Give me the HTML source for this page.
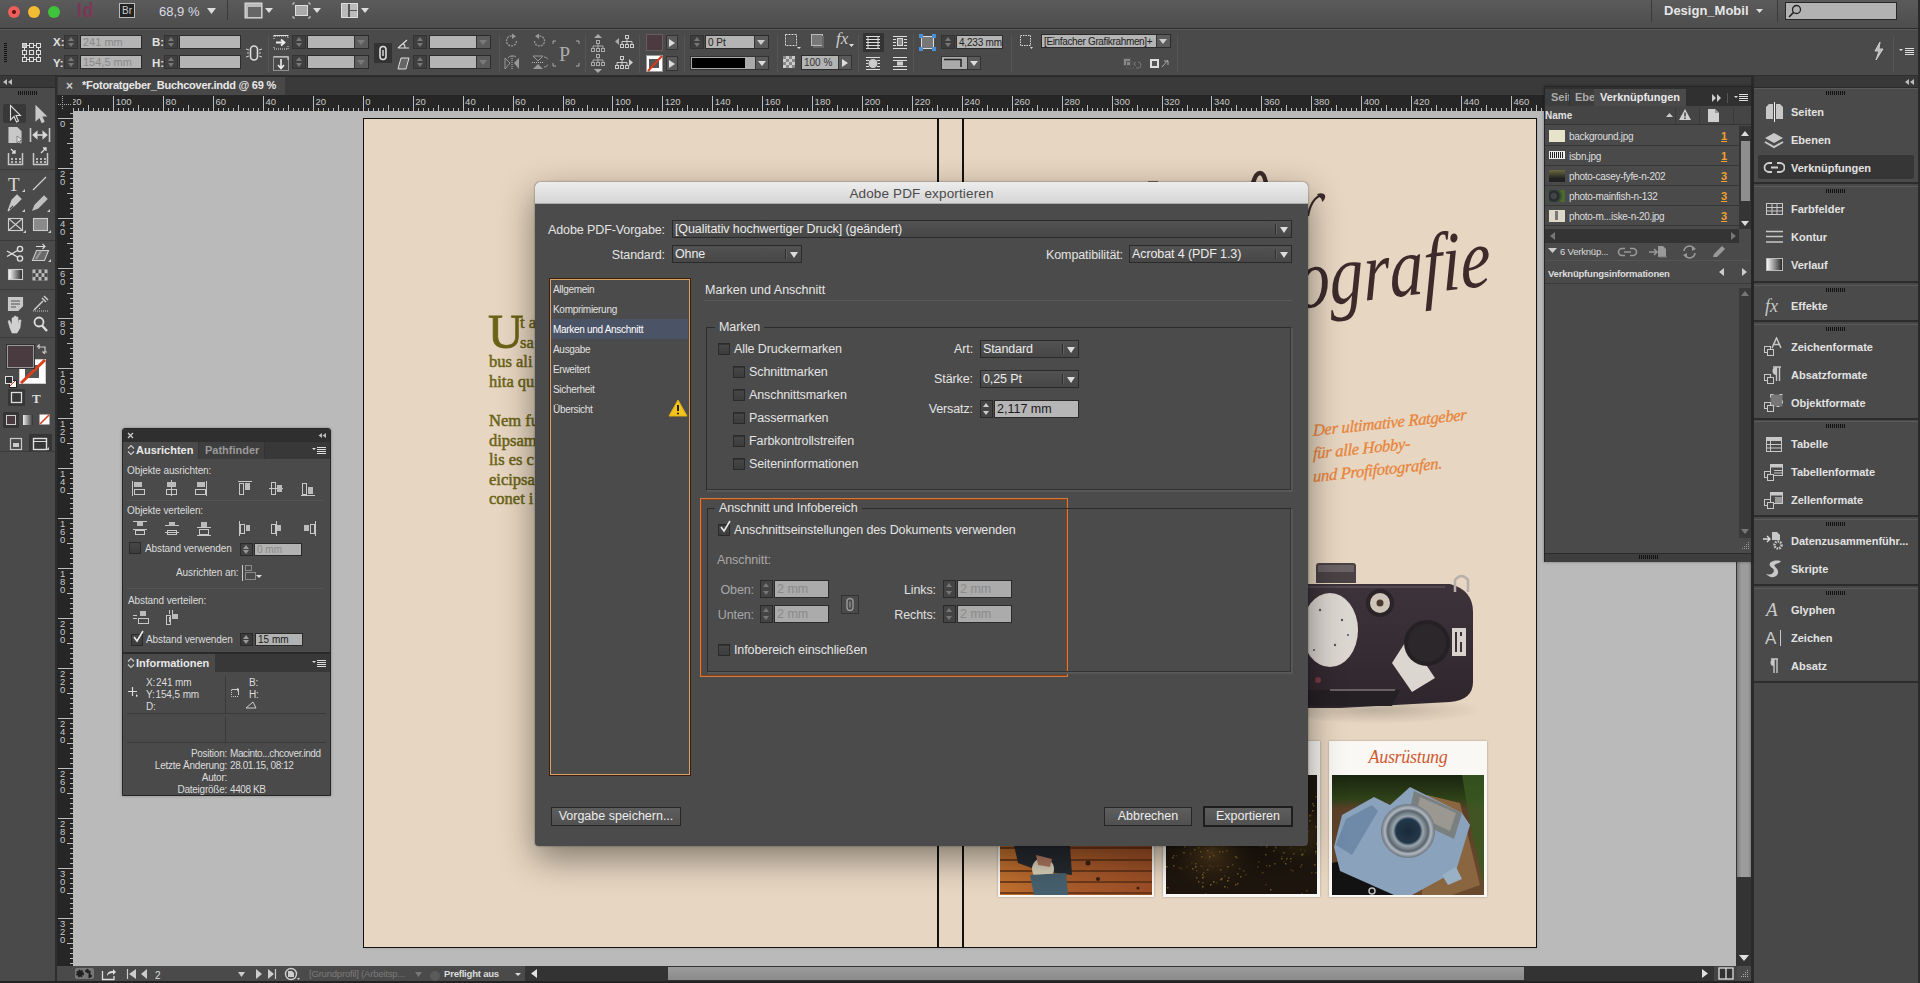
<!DOCTYPE html>
<html><head><meta charset="utf-8">
<style>
*{margin:0;padding:0;box-sizing:border-box}
html,body{width:1920px;height:983px;overflow:hidden;background:#484848;font-family:"Liberation Sans",sans-serif;color:#ddd}
.a{position:absolute}
#title{left:0;top:0;width:1920px;height:29px;background:linear-gradient(#5b5b5b,#4d4d4d);border-bottom:1px solid #2c2c2c}
#ctrl{left:0;top:29px;width:1920px;height:47px;background:#4a4a4a;border-top:1px solid #5a5a5a;border-bottom:1px solid #2e2e2e}
.lbl{font:bold 11.5px "Liberation Sans";color:#e0e0e0}
.spin{width:14px;height:14px;background:#3f3f3f;border:1px solid #333}
.spin::before{content:"";position:absolute;left:3px;top:1px;border:3px solid transparent;border-bottom:4px solid #777;border-top:0}
.spin::after{content:"";position:absolute;left:3px;top:7px;border:3px solid transparent;border-top:4px solid #777;border-bottom:0}
.inp{height:14px;background:#b4b4b4;border:1px solid #2c2c2c;font:11px "Liberation Sans";line-height:13px;padding-left:2px;white-space:nowrap;overflow:hidden}
.dd{padding-right:14px}
.dd::after{content:"";position:absolute;right:0;top:0;width:13px;height:12px;background:#5c5c5c;border-left:1px solid #333}
.dd::before{content:"";position:absolute;right:3px;top:4px;border:4px solid transparent;border-top:5px solid #ccc;border-bottom:0;z-index:2}
.dd.dis::before{border-top-color:#7a7a7a}
.sep{width:1px;background:#3a3a3a;border-right:1px solid #555}
.dl{font:12.5px "Liberation Sans";color:#e4e4e4;white-space:nowrap;letter-spacing:-0.1px;margin-top:1px}
.sel{height:18px;background:linear-gradient(#525252,#474747);border:1px solid #2a2a2a;font:12.5px "Liberation Sans";color:#ececec;line-height:16px;padding-left:2px;white-space:nowrap;letter-spacing:-0.1px}
.sel::after{content:"";position:absolute;right:14px;top:3px;width:1px;height:10px;background:#2e2e2e;border-right:1px solid #5e5e5e}
.sel::before{content:"";position:absolute;right:3px;top:6px;border:4px solid transparent;border-top:6px solid #ddd;border-bottom:0}
.nav{font:10px "Liberation Sans";color:#e0e0e0;letter-spacing:-0.3px;white-space:nowrap}
.grp{border:1px solid #2c2c2c;border-right-color:#5a5a5a;border-bottom-color:#5a5a5a;box-shadow:inset -1px -1px 0 #333,1px 1px 0 #555}
.cb{width:12px;height:12px;background:linear-gradient(#484848,#3c3c3c);border:1px solid #2a2a2a;box-shadow:inset 0 1px 0 #333}
.dspin{width:13px;height:18px;background:#444;border:1px solid #2a2a2a}
.dspin::before{content:"";position:absolute;left:2px;top:2px;border:3.5px solid transparent;border-bottom:4px solid #ccc;border-top:0}
.dspin::after{content:"";position:absolute;left:2px;top:10px;border:3.5px solid transparent;border-top:4px solid #ccc;border-bottom:0}
.dspin.dis::before{border-bottom-color:#777}.dspin.dis::after{border-top-color:#777}
.dinp{height:18px;background:#b6b6b6;border:1px solid #2a2a2a;font:12.5px "Liberation Sans";line-height:16px;padding-left:2px;white-space:nowrap}
.btn{background:linear-gradient(#5e5e5e,#505050);border:1px solid #262626;font:12.5px "Liberation Sans";color:#ececec;text-align:center;line-height:17px;white-space:nowrap}
.pt{font:bold 11px "Liberation Sans";color:#e8e8e8;white-space:nowrap}
.ps{font:10px "Liberation Sans";color:#dcdcdc;white-space:nowrap;letter-spacing:-0.1px}
.pcb{width:12px;height:12px;background:linear-gradient(#474747,#3c3c3c);border:1px solid #2a2a2a}
.pspin{width:13px;height:13px;background:#424242;border:1px solid #2a2a2a}
.pspin::before{content:"";position:absolute;left:2px;top:1px;border:3.5px solid transparent;border-bottom:4px solid #999;border-top:0}
.pspin::after{content:"";position:absolute;left:2px;top:6px;border:3.5px solid transparent;border-top:4px solid #999;border-bottom:0}
.pinp{height:13px;background:#b2b2b2;border:1px solid #2a2a2a;font:10px "Liberation Sans";line-height:11px;padding-left:2px;white-space:nowrap}
.lrow{left:1545px;width:194px;height:20px;background:#4a4a4a;border-bottom:1px solid #363636}
.lt{left:1569px;font:10px "Liberation Sans";color:#dedede;letter-spacing:-0.3px;white-space:nowrap}
.ln{left:1721px;font:bold 11px "Liberation Sans";color:#f0a030;text-decoration:underline}
.dk{left:1791px;font:bold 11px "Liberation Sans";color:#e2e2e2;white-space:nowrap}
.grip{width:19px;height:4px;background:repeating-linear-gradient(90deg,#111 0 1px,transparent 1px 2px)}
.dg{left:1754px;width:166px;background:#4a4a4a;border-top:1px solid #5a5a5a;border-bottom:2px solid #2c2c2c}

</style></head><body>
<!-- TITLE BAR -->
<div id="title" class="a">
 <div class="a" style="left:8px;top:6px;width:12px;height:12px;border-radius:6px;background:#ec5f5a"><div class="a" style="left:4px;top:4px;width:4px;height:4px;border-radius:2px;background:#5a1010"></div></div>
 <div class="a" style="left:28px;top:6px;width:12px;height:12px;border-radius:6px;background:#f2bd32"></div>
 <div class="a" style="left:48px;top:6px;width:12px;height:12px;border-radius:6px;background:#3fc23c"></div>
 <div class="a" style="left:77px;top:-1px;font:bold 19px 'Liberation Sans';color:#7e3656;letter-spacing:1px;transform:scale(.9,1.1);transform-origin:0 50%">Id</div>
 <div class="a" style="left:119px;top:3px;width:16px;height:15px;border:1px solid #bbb;background:#232323;font:10px 'Liberation Sans';color:#ccc;text-align:center;line-height:13px">Br</div>
 <div class="a" style="left:159px;top:4px;font:13px 'Liberation Sans';color:#dcdce4">68,9 %</div>
 <svg class="a" style="left:207px;top:8px" width="9" height="7"><path d="M0 0H9L4.5 6z" fill="#ddd"/></svg>
 <div class="a" style="left:227px;top:0;width:1px;height:20px;background:#3a3a3a"></div>
 <svg class="a" style="left:244px;top:2px" width="30" height="17"><rect x="1" y="1" width="17" height="15" fill="#bbb" stroke="#ddd"/><rect x="4" y="5" width="13" height="10" fill="#666"/><path d="M21 6H29L25 11z" fill="#ddd"/></svg>
 <svg class="a" style="left:292px;top:2px" width="30" height="17"><path d="M1 3V1H3M16 1H18V3M18 14V16H16M3 16H1V14" stroke="#ccc" fill="none"/><rect x="3.5" y="3.5" width="12" height="10" fill="#aaa" stroke="#ddd"/><path d="M21 6H29L25 11z" fill="#ddd"/></svg>
 <svg class="a" style="left:340px;top:2px" width="30" height="17"><rect x="1.5" y="1.5" width="16" height="14" fill="#555" stroke="#ddd"/><rect x="2" y="2" width="6" height="13" fill="#bbb"/><rect x="10" y="2" width="7" height="6" fill="#bbb"/><rect x="10" y="9" width="7" height="6" fill="#bbb"/><path d="M21 6H29L25 11z" fill="#ddd"/></svg>
 <div class="a" style="left:1651px;top:0;width:1px;height:22px;background:#3a3a3a"></div>
 <div class="a" style="left:1664px;top:3px;font:bold 13px 'Liberation Sans';color:#e6e6e6">Design_Mobil</div>
 <svg class="a" style="left:1756px;top:9px" width="8" height="5"><path d="M0 0H7L3.5 4z" fill="#ddd"/></svg>
 <div class="a" style="left:1777px;top:0;width:1px;height:22px;background:#3a3a3a"></div>
 <div class="a" style="left:1785px;top:2px;width:112px;height:18px;background:#b2b2b2;border:1px solid #262626"></div>
 <svg class="a" style="left:1788px;top:4px" width="14" height="14"><circle cx="8.5" cy="5.5" r="4" fill="none" stroke="#222" stroke-width="1.3"/><path d="M5.6 8.4L1 13" stroke="#222" stroke-width="1.5"/></svg>
</div>
<!-- CONTROL BAR -->
<div id="ctrl" class="a">
 <div class="a" style="left:4px;top:13px;width:3px;height:19px;background:repeating-linear-gradient(#111 0 1px,#4a4a4a 1px 2px)"></div>
 <svg class="a" style="left:21px;top:12px" width="22" height="22"><g fill="none" stroke="#ddd" stroke-width="1"><rect x="1.5" y="1.5" width="4" height="4" fill="#bbb"/><rect x="8.5" y="1.5" width="4" height="4"/><rect x="15.5" y="1.5" width="4" height="4"/><rect x="1.5" y="8.5" width="4" height="4"/><rect x="8.5" y="8.5" width="4" height="4"/><rect x="15.5" y="8.5" width="4" height="4"/><rect x="1.5" y="15.5" width="4" height="4"/><rect x="8.5" y="15.5" width="4" height="4"/><rect x="15.5" y="15.5" width="4" height="4"/><path d="M5.5 3.5H8.5M12.5 3.5H15.5M5.5 17.5H8.5M12.5 17.5H15.5M3.5 5.5V8.5M3.5 12.5V15.5M17.5 5.5V8.5M17.5 12.5V15.5"/></g></svg>
 <div class="a lbl" style="left:53px;top:6px">X:</div>
 <div class="a lbl" style="left:53px;top:27px">Y:</div>
 <div class="a spin" style="left:64px;top:5px"></div>
 <div class="a spin" style="left:64px;top:25px"></div>
 <div class="a inp" style="left:80px;top:5px;width:62px;color:#888">241 mm</div>
 <div class="a inp" style="left:80px;top:25px;width:62px;color:#888">154,5 mm</div>
 <div class="a lbl" style="left:152px;top:6px">B:</div>
 <div class="a lbl" style="left:152px;top:27px">H:</div>
 <div class="a spin" style="left:164px;top:5px"></div>
 <div class="a spin" style="left:164px;top:25px"></div>
 <div class="a inp" style="left:179px;top:5px;width:62px"></div>
 <div class="a inp" style="left:179px;top:25px;width:62px"></div>
 <svg class="a" style="left:246px;top:14px" width="16" height="18"><g stroke="#ddd" fill="none" stroke-width="1.6"><rect x="4.5" y="2" width="7" height="14" rx="3.5"/></g><path d="M0 5L3 6M0 13L3 12M16 5L13 6M16 13L13 12M1 9H3M13 9H15" stroke="#ccc"/></svg>
 <div class="a sep" style="left:268px;top:5px;height:38px"></div>
 <svg class="a" style="left:273px;top:5px" width="16" height="15"><path d="M1 4V1H15V4M15 11V14H1V11" stroke="#ddd" fill="none" stroke-dasharray="1 1"/><rect x="0.5" y="0.5" width="15" height="14" fill="none" stroke="#ddd" stroke-dasharray="15 100"/><path d="M3 7.5H11M8 4.5L11.5 7.5L8 10.5" stroke="#eee" stroke-width="1.8" fill="none"/></svg>
 <svg class="a" style="left:273px;top:26px" width="16" height="15"><rect x="0.5" y="0.5" width="15" height="14" fill="none" stroke="#ddd" stroke-dasharray="1 1"/><path d="M1 1H15V4" stroke="#ddd" fill="none"/><path d="M8 3V12M5 9L8 12.5L11 9" stroke="#eee" stroke-width="1.6" fill="none"/></svg>
 <div class="a spin" style="left:292px;top:5px"></div>
 <div class="a spin" style="left:292px;top:25px"></div>
 <div class="a inp dd dis" style="left:307px;top:5px;width:62px"></div>
 <div class="a inp dd dis" style="left:307px;top:25px;width:62px"></div>
 <div class="a" style="left:374px;top:13px;width:18px;height:20px;background:#333"></div>
 <svg class="a" style="left:378px;top:15px" width="10" height="16"><rect x="2" y="1.5" width="6" height="13" rx="3" fill="none" stroke="#ddd" stroke-width="1.6"/><path d="M5 5V11" stroke="#ddd" stroke-width="1.4"/></svg>
 <svg class="a" style="left:397px;top:7px" width="13" height="12"><path d="M1 11H12M1 11L10 3M8 11A7 7 0 0 0 6 6" stroke="#ddd" fill="none" stroke-width="1.2"/></svg>
 <svg class="a" style="left:397px;top:27px" width="13" height="13"><path d="M1 12L4 1H12L9 12z" stroke="#ddd" fill="#666" stroke-width="1"/></svg>
 <div class="a spin" style="left:413px;top:5px"></div>
 <div class="a spin" style="left:413px;top:25px"></div>
 <div class="a inp dd dis" style="left:429px;top:5px;width:62px"></div>
 <div class="a inp dd dis" style="left:429px;top:25px;width:62px"></div>
 <div class="a sep" style="left:499px;top:5px;height:38px"></div>
 <svg class="a" style="left:504px;top:3px" width="16" height="17"><path d="M12.5 8A5 5 0 1 1 9 3.2" fill="none" stroke="#999" stroke-width="1.3" stroke-dasharray="2 1"/><path d="M8 0.5L12 3.2L8 6z" fill="#999"/></svg>
 <svg class="a" style="left:531px;top:3px" width="16" height="17"><path d="M3.5 8A5 5 0 1 0 7 3.2" fill="none" stroke="#999" stroke-width="1.3" stroke-dasharray="2 1"/><path d="M8 0.5L4 3.2L8 6z" fill="#999"/></svg>
 <svg class="a" style="left:504px;top:24px" width="16" height="17"><path d="M1 4L6 9L1 15z" fill="none" stroke="#999"/><path d="M15 4L10 9L15 15z" fill="#999"/><path d="M8 2V16" stroke="#bbb" stroke-dasharray="1 1"/><path d="M4 4A5 4 0 0 1 12 3" fill="none" stroke="#999"/></svg>
 <svg class="a" style="left:531px;top:24px" width="17" height="17"><path d="M2 2H12L7 7z" fill="none" stroke="#999"/><path d="M2 15H12L7 10z" fill="#999"/><path d="M1 8.5H13" stroke="#bbb" stroke-dasharray="1 1"/><path d="M13 3A5 5 0 0 1 13 13" fill="none" stroke="#999"/></svg>
 <svg class="a" style="left:552px;top:10px" width="28" height="27"><path d="M1 4V1H4M24 1H27V4M27 23V26H24M4 26H1V23" stroke="#aaa" fill="none"/><text x="7" y="21" font-family="Liberation Serif" font-size="20" fill="#aaa">P</text></svg>
 <div class="a sep" style="left:585px;top:5px;height:38px"></div>
 <svg class="a" style="left:590px;top:3px" width="16" height="20"><path d="M4 5L8 1L12 5z" fill="#aaa"/><g fill="none" stroke="#aaa"><rect x="6.5" y="7.5" width="3" height="3"/><rect x="1.5" y="15.5" width="3" height="3"/><rect x="6.5" y="15.5" width="3" height="3"/><rect x="11.5" y="15.5" width="3" height="3"/><path d="M8 10.5V15.5M3 15.5V13H13V15.5"/></g></svg>
 <svg class="a" style="left:590px;top:24px" width="16" height="20"><path d="M4 15L8 19L12 15z" fill="#aaa"/><g fill="none" stroke="#aaa"><rect x="6.5" y="0.5" width="3" height="3"/><rect x="1.5" y="8.5" width="3" height="3"/><rect x="6.5" y="8.5" width="3" height="3"/><rect x="11.5" y="8.5" width="3" height="3"/><path d="M8 3.5V8.5M3 8.5V6H13V8.5"/></g></svg>
 <svg class="a" style="left:614px;top:5px" width="20" height="16"><path d="M5 3L1 6.5L5 10z" fill="#aaa"/><g fill="none" stroke="#ccc"><rect x="11.5" y="0.5" width="3" height="3"/><rect x="6.5" y="9.5" width="3" height="3"/><rect x="11.5" y="9.5" width="3" height="3"/><rect x="16.5" y="9.5" width="3" height="3" /><path d="M13 3.5V9.5M8 9.5V6.5H18V9.5"/></g></svg>
 <svg class="a" style="left:614px;top:26px" width="20" height="16"><path d="M15 3L19 6.5L15 10z" fill="#ccc"/><g fill="none" stroke="#ccc"><rect x="6.5" y="0.5" width="3" height="3"/><rect x="1.5" y="9.5" width="3" height="3"/><rect x="6.5" y="9.5" width="3" height="3"/><rect x="11.5" y="9.5" width="3" height="3"/><path d="M8 3.5V9.5M3 9.5V6.5H13V9.5"/></g></svg>
 <div class="a sep" style="left:639px;top:5px;height:38px"></div>
 <div class="a" style="left:646px;top:4px;width:17px;height:17px;background:#4b3b40;border:1px solid #6b5b5f"></div>
 <div class="a" style="left:646px;top:25px;width:17px;height:17px;background:#fff;border:1px solid #999"></div>
 <div class="a" style="left:649px;top:29px;width:10px;height:9px;background:#555"></div>
 <svg class="a" style="left:646px;top:25px" width="17" height="17"><path d="M2 16L16 1" stroke="#d43a1a" stroke-width="2"/></svg>
 <div class="a" style="left:666px;top:5px;width:12px;height:15px;background:#5a5a5a;border:1px solid #333"></div>
 <svg class="a" style="left:669px;top:9px" width="7" height="8"><path d="M0 0L6 4L0 8z" fill="#ddd"/></svg>
 <div class="a" style="left:666px;top:26px;width:12px;height:15px;background:#5a5a5a;border:1px solid #333"></div>
 <svg class="a" style="left:669px;top:30px" width="7" height="8"><path d="M0 0L6 4L0 8z" fill="#ddd"/></svg>
 <div class="a sep" style="left:684px;top:5px;height:38px"></div>
 <div class="a spin" style="left:690px;top:5px;background:#3d3d3d"></div>
 <div class="a inp dd" style="left:705px;top:5px;width:64px;color:#222;font-size:10px">0 Pt</div>
 <div class="a" style="left:690px;top:26px;width:79px;height:14px;background:#aaa;border:1px solid #333"></div>
 <div class="a" style="left:692px;top:28px;width:53px;height:10px;background:#000"></div>
 <div class="a" style="left:755px;top:26px;width:14px;height:14px;background:#5a5a5a;border:1px solid #333"></div>
 <svg class="a" style="left:757px;top:31px" width="10" height="6"><path d="M1 0H9L5 5z" fill="#ddd"/></svg>
 <div class="a sep" style="left:777px;top:5px;height:38px"></div>
 <svg class="a" style="left:784px;top:3px" width="18" height="17"><rect x="1.5" y="1.5" width="11" height="11" fill="none" stroke="#ddd" stroke-dasharray="2 1"/><rect x="3" y="3" width="8" height="8" fill="#555"/><path d="M13 14H17L15 16z" fill="#ddd"/></svg>
 <svg class="a" style="left:810px;top:3px" width="16" height="16"><rect x="1.5" y="1.5" width="11" height="11" fill="#777" stroke="#bbb"/><path d="M13 3V14H3" stroke="#666" stroke-width="2" fill="none"/></svg>
 <div class="a" style="left:836px;top:-1px;font:italic 17px 'Liberation Serif';color:#ccc">fx</div>
 <svg class="a" style="left:849px;top:14px" width="6" height="4"><path d="M0 0H5L2.5 3z" fill="#ddd"/></svg>
 <svg class="a" style="left:782px;top:25px" width="14" height="14"><rect x="1" y="1" width="12" height="12" fill="#ccc"/><g fill="#888"><rect x="1" y="1" width="3" height="3"/><rect x="7" y="1" width="3" height="3"/><rect x="4" y="4" width="3" height="3"/><rect x="10" y="4" width="3" height="3"/><rect x="1" y="7" width="3" height="3"/><rect x="7" y="7" width="3" height="3"/><rect x="4" y="10" width="3" height="3"/><rect x="10" y="10" width="3" height="3"/></g></svg>
 <div class="a inp" style="left:801px;top:25px;width:50px;height:15px;color:#333;font-size:10px">100 %</div>
 <div class="a" style="left:838px;top:25px;width:14px;height:15px;background:#5a5a5a;border:1px solid #333"></div>
 <svg class="a" style="left:842px;top:29px" width="7" height="8"><path d="M0 0L6 4L0 8z" fill="#ddd"/></svg>
 <div class="a sep" style="left:858px;top:5px;height:38px"></div>
 <div class="a" style="left:863px;top:3px;width:21px;height:19px;background:#333"></div>
 <svg class="a" style="left:865px;top:5px" width="16" height="15"><path d="M1 1.5H15M1 4.5H15M1 7.5H15M1 10.5H15M1 13.5H15" stroke="#ddd"/><path d="M3 1V14M13 1V14" stroke="#ddd"/></svg>
 <svg class="a" style="left:892px;top:5px" width="16" height="15"><path d="M1 1.5H15M1 13.5H15M1 4.5H4M12 4.5H15M1 7.5H4M12 7.5H15M1 10.5H4M12 10.5H15" stroke="#ddd"/><rect x="5.5" y="3.5" width="5" height="7" fill="#888" stroke="#ddd"/></svg>
 <svg class="a" style="left:865px;top:26px" width="16" height="15"><path d="M1 1.5H15M1 13.5H15M1 4.5H4M12 4.5H15M1 7.5H3M13 7.5H15M1 10.5H4M12 10.5H15" stroke="#ddd"/><circle cx="8" cy="7.5" r="4.5" fill="#ccc"/></svg>
 <svg class="a" style="left:892px;top:26px" width="16" height="15"><path d="M1 1.5H15M1 4.5H15M1 10.5H15M1 13.5H15" stroke="#ddd"/><rect x="5" y="5.5" width="6" height="4" fill="#ccc"/></svg>
 <div class="a sep" style="left:913px;top:5px;height:38px"></div>
 <svg class="a" style="left:919px;top:4px" width="17" height="17"><rect x="2.5" y="2.5" width="12" height="12" fill="#777" stroke="#ddd"/><g fill="#4a90d9"><rect x="0" y="0" width="4" height="4"/><rect x="13" y="0" width="4" height="4"/><rect x="0" y="13" width="4" height="4"/><rect x="13" y="13" width="4" height="4"/></g></svg>
 <div class="a spin" style="left:941px;top:5px;background:#3d3d3d"></div>
 <div class="a inp" style="left:956px;top:5px;width:47px;color:#222;font-size:10px;letter-spacing:-0.2px">4,233 mm</div>
 <div class="a" style="left:941px;top:26px;width:40px;height:14px;background:#aaa;border:1px solid #333"></div>
 <svg class="a" style="left:943px;top:28px" width="25" height="10"><path d="M1 1.5H18V9" stroke="#222" stroke-width="1.5" fill="none"/></svg>
 <div class="a" style="left:967px;top:26px;width:14px;height:14px;background:#5a5a5a;border:1px solid #333"></div>
 <svg class="a" style="left:969px;top:31px" width="10" height="6"><path d="M1 0H9L5 5z" fill="#ddd"/></svg>
 <div class="a sep" style="left:1011px;top:5px;height:38px"></div>
 <svg class="a" style="left:1019px;top:4px" width="15" height="16"><rect x="1.5" y="1.5" width="10" height="10" fill="none" stroke="#ddd" stroke-dasharray="1.5 1"/><path d="M11 13H14L12.5 15z" fill="#ddd"/></svg>
 <div class="a inp dd" style="left:1041px;top:4px;width:130px;color:#222;font-size:10px;letter-spacing:-0.35px">[Einfacher Grafikrahmen]+</div>
 <svg class="a" style="left:1122px;top:27px" width="50" height="13"><rect x="1.5" y="1.5" width="7" height="7" fill="#888" stroke="#555"/><rect x="4.5" y="4.5" width="7" height="7" fill="none" stroke="#555"/><path d="M16 5A3 3 0 1 1 16 11H14M14 5L12 7L14 9" stroke="#777" fill="none"/><rect x="28" y="2" width="9" height="9" fill="#ddd"/><rect x="30" y="4" width="5" height="5" fill="#555"/><path d="M40 10L46 3M42 4H46V8" stroke="#aaa" fill="none"/></svg>
 <div class="a sep" style="left:1177px;top:5px;height:38px"></div>
 <div class="a sep" style="left:1893px;top:6px;height:36px"></div>
 <svg class="a" style="left:1873px;top:12px" width="11" height="19"><path d="M7 0L2 9H6L3 18L10 7H6z" fill="#bbb" stroke="#ccc" stroke-width="1"/></svg>
 <svg class="a" style="left:1899px;top:17px" width="16" height="10"><path d="M0 2H4L2 4z" fill="#ddd"/><path d="M6 1.5H15M6 3.5H15M6 5.5H15M6 7.5H15" stroke="#ddd"/></svg>
</div>
<!-- WORKSPACE FRAME -->
<div class="a" style="left:0;top:76px;width:57px;height:907px;background:#2e2e2e"></div>
<div class="a" style="left:57px;top:76px;width:1696px;height:19px;background:#3a3a3a;border-top:1px solid #2a2a2a"></div>
<div class="a" style="left:58px;top:77px;width:227px;height:18px;background:#484848"></div>
<div class="a" style="left:66px;top:79px;font:bold 12px 'Liberation Sans';color:#ccc">×</div>
<div class="a" style="left:82px;top:79px;font:bold 11px 'Liberation Sans';color:#e8e8e8;letter-spacing:-0.25px">*Fotoratgeber_Buchcover.indd @ 69 %</div>
<div class="a" style="left:57px;top:95px;width:1696px;height:16px;background:#262626"></div>
<div class="a" style="left:57px;top:111px;width:16px;height:855px;background:#262626"></div>
<div class="a" style="left:73px;top:111px;width:1663px;height:855px;background:#bababb"></div>
<div class="a" style="left:1736px;top:111px;width:15px;height:855px;background:#333"></div>
<div class="a" style="left:1751px;top:76px;width:3px;height:907px;background:#2a2a2a"></div>
<div class="a" style="left:57px;top:966px;width:1694px;height:15px;background:#4a4a4a"></div>
<div class="a" style="left:0;top:981px;width:1920px;height:2px;background:#222"></div>
<!-- scrollbars & status -->
<div class="a" style="left:1737px;top:111px;width:14px;height:766px;background:linear-gradient(90deg,#7a7a7a,#9c9c9c 30%,#9c9c9c 80%,#7e7e7e)"></div>
<svg class="a" style="left:1738px;top:954px" width="12" height="8"><path d="M1 1H11L6 7z" fill="#e0e0e0"/></svg>
<div class="a" style="left:525px;top:966px;width:1189px;height:15px;background:#333"></div>
<div class="a" style="left:668px;top:967px;width:856px;height:13px;background:linear-gradient(#9c9c9c,#8a8a8a)"></div>
<svg class="a" style="left:530px;top:968px" width="8" height="11"><path d="M7 1V10L1 5.5z" fill="#e0e0e0"/></svg>
<svg class="a" style="left:1701px;top:968px" width="8" height="11"><path d="M1 1V10L7 5.5z" fill="#e0e0e0"/></svg>
<div class="a" style="left:1714px;top:966px;width:23px;height:15px;background:#444"></div>
<svg class="a" style="left:1718px;top:967px" width="16" height="13"><rect x="1" y="1" width="14" height="11" fill="#333" stroke="#e0e0e0" stroke-width="1.3"/><path d="M8 1V12" stroke="#e0e0e0" stroke-width="1.3"/></svg>
<svg class="a" style="left:1739px;top:969px" width="10" height="10"><g fill="#aaa"><rect x="8" y="1" width="1" height="1"/><rect x="6" y="3" width="1" height="1"/><rect x="8" y="3" width="1" height="1"/><rect x="4" y="5" width="1" height="1"/><rect x="6" y="5" width="1" height="1"/><rect x="8" y="5" width="1" height="1"/><rect x="2" y="7" width="1" height="1"/><rect x="4" y="7" width="1" height="1"/><rect x="6" y="7" width="1" height="1"/><rect x="8" y="7" width="1" height="1"/></g></svg>
<div class="a" style="left:75px;top:968px;width:19px;height:11px;background:#777;border-radius:2px"></div>
<svg class="a" style="left:75px;top:967px" width="240" height="14">
 <circle cx="5" cy="6.5" r="3" fill="#222" stroke="#222" stroke-width="2" stroke-dasharray="1.5 1"/><path d="M10 4L13 2V6zM17 9L14 11V7zM12 4H15V9" fill="#222" stroke="#222"/>
 <path d="M27.5 4V12.5H39V9" fill="none" stroke="#ddd" stroke-width="1.3"/><path d="M32 9C32 5 35 4 38 4V2L41 5L38 8V6C35 6 33 7 32 9z" fill="#ddd"/>
 <path d="M52.5 2V12" stroke="#ccc" stroke-width="1.2"/><path d="M61 2V12L54 7z" fill="#ccc"/>
 <path d="M72 2V12L66 7z" fill="#ccc"/>
 <text x="80" y="12" font-family="Liberation Sans" font-size="10" fill="#ddd">2</text>
 <path d="M163 5H170L166.5 10z" fill="#ccc"/>
 <path d="M181 2V12L187 7z" fill="#ccc"/>
 <path d="M193 2V12L199 7z" fill="#ccc"/><path d="M200.5 2V12" stroke="#ccc" stroke-width="1.2"/>
 <circle cx="216" cy="7" r="5.5" fill="none" stroke="#ccc" stroke-width="1.4"/><path d="M213 4H217L219 6V10H213z" fill="#ccc"/><path d="M222 11H225L223.5 13z" fill="#ccc"/>
</svg>
<div class="a" style="left:309px;top:968px;font:9.5px 'Liberation Sans';color:#7a7a7a;letter-spacing:-0.2px">[Grundprofil] (Arbeitsp...</div>
<svg class="a" style="left:414px;top:971px" width="30" height="10"><path d="M1 1H8L4.5 6z" fill="#777"/><circle cx="21" cy="5" r="5" fill="#5a5a5a"/></svg>
<div class="a" style="left:444px;top:968px;font:bold 9.5px 'Liberation Sans';color:#ddd;letter-spacing:-0.2px">Preflight aus</div>
<svg class="a" style="left:514px;top:972px" width="8" height="5"><path d="M1 1H7L4 4z" fill="#ddd"/></svg>
<svg class="a" style="left:57px;top:95px" width="1679" height="16"><path d="M1.8 13V16 M6.8 1V16 M11.8 13V16 M16.8 13V16 M21.8 13V16 M26.7 13V16 M31.7 10V16 M36.7 13V16 M41.7 13V16 M46.7 13V16 M51.7 13V16 M56.7 1V16 M61.7 13V16 M66.7 13V16 M71.7 13V16 M76.7 13V16 M81.7 10V16 M86.7 13V16 M91.6 13V16 M96.6 13V16 M101.6 13V16 M106.6 1V16 M111.6 13V16 M116.6 13V16 M121.6 13V16 M126.6 13V16 M131.6 10V16 M136.6 13V16 M141.6 13V16 M146.6 13V16 M151.5 13V16 M156.5 1V16 M161.5 13V16 M166.5 13V16 M171.5 13V16 M176.5 13V16 M181.5 10V16 M186.5 13V16 M191.5 13V16 M196.5 13V16 M201.5 13V16 M206.5 1V16 M211.5 13V16 M216.4 13V16 M221.4 13V16 M226.4 13V16 M231.4 10V16 M236.4 13V16 M241.4 13V16 M246.4 13V16 M251.4 13V16 M256.4 1V16 M261.4 13V16 M266.4 13V16 M271.4 13V16 M276.3 13V16 M281.3 10V16 M286.3 13V16 M291.3 13V16 M296.3 13V16 M301.3 13V16 M306.3 1V16 M311.3 13V16 M316.3 13V16 M321.3 13V16 M326.3 13V16 M331.3 10V16 M336.3 13V16 M341.2 13V16 M346.2 13V16 M351.2 13V16 M356.2 1V16 M361.2 13V16 M366.2 13V16 M371.2 13V16 M376.2 13V16 M381.2 10V16 M386.2 13V16 M391.2 13V16 M396.2 13V16 M401.1 13V16 M406.1 1V16 M411.1 13V16 M416.1 13V16 M421.1 13V16 M426.1 13V16 M431.1 10V16 M436.1 13V16 M441.1 13V16 M446.1 13V16 M451.1 13V16 M456.1 1V16 M461.1 13V16 M466.0 13V16 M471.0 13V16 M476.0 13V16 M481.0 10V16 M486.0 13V16 M491.0 13V16 M496.0 13V16 M501.0 13V16 M506.0 1V16 M511.0 13V16 M516.0 13V16 M521.0 13V16 M525.9 13V16 M530.9 10V16 M535.9 13V16 M540.9 13V16 M545.9 13V16 M550.9 13V16 M555.9 1V16 M560.9 13V16 M565.9 13V16 M570.9 13V16 M575.9 13V16 M580.9 10V16 M585.9 13V16 M590.8 13V16 M595.8 13V16 M600.8 13V16 M605.8 1V16 M610.8 13V16 M615.8 13V16 M620.8 13V16 M625.8 13V16 M630.8 10V16 M635.8 13V16 M640.8 13V16 M645.8 13V16 M650.7 13V16 M655.7 1V16 M660.7 13V16 M665.7 13V16 M670.7 13V16 M675.7 13V16 M680.7 10V16 M685.7 13V16 M690.7 13V16 M695.7 13V16 M700.7 13V16 M705.7 1V16 M710.7 13V16 M715.6 13V16 M720.6 13V16 M725.6 13V16 M730.6 10V16 M735.6 13V16 M740.6 13V16 M745.6 13V16 M750.6 13V16 M755.6 1V16 M760.6 13V16 M765.6 13V16 M770.6 13V16 M775.5 13V16 M780.5 10V16 M785.5 13V16 M790.5 13V16 M795.5 13V16 M800.5 13V16 M805.5 1V16 M810.5 13V16 M815.5 13V16 M820.5 13V16 M825.5 13V16 M830.5 10V16 M835.5 13V16 M840.4 13V16 M845.4 13V16 M850.4 13V16 M855.4 1V16 M860.4 13V16 M865.4 13V16 M870.4 13V16 M875.4 13V16 M880.4 10V16 M885.4 13V16 M890.4 13V16 M895.4 13V16 M900.3 13V16 M905.3 1V16 M910.3 13V16 M915.3 13V16 M920.3 13V16 M925.3 13V16 M930.3 10V16 M935.3 13V16 M940.3 13V16 M945.3 13V16 M950.3 13V16 M955.3 1V16 M960.3 13V16 M965.2 13V16 M970.2 13V16 M975.2 13V16 M980.2 10V16 M985.2 13V16 M990.2 13V16 M995.2 13V16 M1000.2 13V16 M1005.2 1V16 M1010.2 13V16 M1015.2 13V16 M1020.2 13V16 M1025.1 13V16 M1030.1 10V16 M1035.1 13V16 M1040.1 13V16 M1045.1 13V16 M1050.1 13V16 M1055.1 1V16 M1060.1 13V16 M1065.1 13V16 M1070.1 13V16 M1075.1 13V16 M1080.1 10V16 M1085.1 13V16 M1090.0 13V16 M1095.0 13V16 M1100.0 13V16 M1105.0 1V16 M1110.0 13V16 M1115.0 13V16 M1120.0 13V16 M1125.0 13V16 M1130.0 10V16 M1135.0 13V16 M1140.0 13V16 M1145.0 13V16 M1149.9 13V16 M1154.9 1V16 M1159.9 13V16 M1164.9 13V16 M1169.9 13V16 M1174.9 13V16 M1179.9 10V16 M1184.9 13V16 M1189.9 13V16 M1194.9 13V16 M1199.9 13V16 M1204.9 1V16 M1209.9 13V16 M1214.8 13V16 M1219.8 13V16 M1224.8 13V16 M1229.8 10V16 M1234.8 13V16 M1239.8 13V16 M1244.8 13V16 M1249.8 13V16 M1254.8 1V16 M1259.8 13V16 M1264.8 13V16 M1269.8 13V16 M1274.7 13V16 M1279.7 10V16 M1284.7 13V16 M1289.7 13V16 M1294.7 13V16 M1299.7 13V16 M1304.7 1V16 M1309.7 13V16 M1314.7 13V16 M1319.7 13V16 M1324.7 13V16 M1329.7 10V16 M1334.7 13V16 M1339.6 13V16 M1344.6 13V16 M1349.6 13V16 M1354.6 1V16 M1359.6 13V16 M1364.6 13V16 M1369.6 13V16 M1374.6 13V16 M1379.6 10V16 M1384.6 13V16 M1389.6 13V16 M1394.6 13V16 M1399.5 13V16 M1404.5 1V16 M1409.5 13V16 M1414.5 13V16 M1419.5 13V16 M1424.5 13V16 M1429.5 10V16 M1434.5 13V16 M1439.5 13V16 M1444.5 13V16 M1449.5 13V16 M1454.5 1V16 M1459.5 13V16 M1464.4 13V16 M1469.4 13V16 M1474.4 13V16 M1479.4 10V16 M1484.4 13V16 M1489.4 13V16 M1494.4 13V16 M1499.4 13V16 M1504.4 1V16 M1509.4 13V16 M1514.4 13V16 M1519.4 13V16 M1524.3 13V16 M1529.3 10V16 M1534.3 13V16 M1539.3 13V16 M1544.3 13V16 M1549.3 13V16 M1554.3 1V16 M1559.3 13V16 M1564.3 13V16 M1569.3 13V16 M1574.3 13V16 M1579.3 10V16 M1584.3 13V16 M1589.2 13V16 M1594.2 13V16 M1599.2 13V16 M1604.2 1V16 M1609.2 13V16 M1614.2 13V16 M1619.2 13V16 M1624.2 13V16 M1629.2 10V16 M1634.2 13V16 M1639.2 13V16 M1644.2 13V16 M1649.1 13V16 M1654.1 1V16 M1659.1 13V16 M1664.1 13V16 M1669.1 13V16 M1674.1 13V16" stroke="#bdbdbd" stroke-width="1" shape-rendering="crispEdges"/><g font-family="Liberation Sans" font-size="9.5" fill="#c8c8c8"><text x="8.8" y="10">120</text><text x="58.7" y="10">100</text><text x="108.6" y="10">80</text><text x="158.5" y="10">60</text><text x="208.5" y="10">40</text><text x="258.4" y="10">20</text><text x="308.3" y="10">0</text><text x="358.2" y="10">20</text><text x="408.1" y="10">40</text><text x="458.1" y="10">60</text><text x="508.0" y="10">80</text><text x="557.9" y="10">100</text><text x="607.8" y="10">120</text><text x="657.7" y="10">140</text><text x="707.7" y="10">160</text><text x="757.6" y="10">180</text><text x="807.5" y="10">200</text><text x="857.4" y="10">220</text><text x="907.3" y="10">240</text><text x="957.3" y="10">260</text><text x="1007.2" y="10">280</text><text x="1057.1" y="10">300</text><text x="1107.0" y="10">320</text><text x="1156.9" y="10">340</text><text x="1206.9" y="10">360</text><text x="1256.8" y="10">380</text><text x="1306.7" y="10">400</text><text x="1356.6" y="10">420</text><text x="1406.5" y="10">440</text><text x="1456.5" y="10">460</text><text x="1506.4" y="10">480</text><text x="1556.3" y="10">500</text><text x="1606.2" y="10">520</text><text x="1656.1" y="10">540</text></g></svg>
<svg class="a" style="left:57px;top:111px" width="16" height="855"><path d="M13 2.2H16 M1 7.2H16 M13 12.2H16 M13 17.2H16 M13 22.2H16 M13 27.2H16 M10 32.2H16 M13 37.2H16 M13 42.2H16 M13 47.2H16 M13 52.2H16 M1 57.2H16 M13 62.2H16 M13 67.2H16 M13 72.2H16 M13 77.2H16 M10 82.2H16 M13 87.2H16 M13 92.2H16 M13 97.2H16 M13 102.2H16 M1 107.2H16 M13 112.2H16 M13 117.2H16 M13 122.2H16 M13 127.2H16 M10 132.2H16 M13 137.2H16 M13 142.2H16 M13 147.2H16 M13 152.2H16 M1 157.2H16 M13 162.2H16 M13 167.2H16 M13 172.2H16 M13 177.2H16 M10 182.2H16 M13 187.2H16 M13 192.2H16 M13 197.2H16 M13 202.2H16 M1 207.2H16 M13 212.2H16 M13 217.2H16 M13 222.2H16 M13 227.2H16 M10 232.2H16 M13 237.2H16 M13 242.2H16 M13 247.2H16 M13 252.2H16 M1 257.2H16 M13 262.2H16 M13 267.2H16 M13 272.2H16 M13 277.2H16 M10 282.2H16 M13 287.2H16 M13 292.2H16 M13 297.2H16 M13 302.2H16 M1 307.2H16 M13 312.2H16 M13 317.2H16 M13 322.2H16 M13 327.2H16 M10 332.2H16 M13 337.2H16 M13 342.2H16 M13 347.2H16 M13 352.2H16 M1 357.2H16 M13 362.2H16 M13 367.2H16 M13 372.2H16 M13 377.2H16 M10 382.2H16 M13 387.2H16 M13 392.2H16 M13 397.2H16 M13 402.2H16 M1 407.2H16 M13 412.2H16 M13 417.2H16 M13 422.2H16 M13 427.2H16 M10 432.2H16 M13 437.2H16 M13 442.2H16 M13 447.2H16 M13 452.2H16 M1 457.2H16 M13 462.2H16 M13 467.2H16 M13 472.2H16 M13 477.2H16 M10 482.2H16 M13 487.2H16 M13 492.2H16 M13 497.2H16 M13 502.2H16 M1 507.2H16 M13 512.2H16 M13 517.2H16 M13 522.2H16 M13 527.2H16 M10 532.2H16 M13 537.2H16 M13 542.2H16 M13 547.2H16 M13 552.2H16 M1 557.2H16 M13 562.2H16 M13 567.2H16 M13 572.2H16 M13 577.2H16 M10 582.2H16 M13 587.2H16 M13 592.2H16 M13 597.2H16 M13 602.2H16 M1 607.2H16 M13 612.2H16 M13 617.2H16 M13 622.2H16 M13 627.2H16 M10 632.2H16 M13 637.2H16 M13 642.2H16 M13 647.2H16 M13 652.2H16 M1 657.2H16 M13 662.2H16 M13 667.2H16 M13 672.2H16 M13 677.2H16 M10 682.2H16 M13 687.2H16 M13 692.2H16 M13 697.2H16 M13 702.2H16 M1 707.2H16 M13 712.2H16 M13 717.2H16 M13 722.2H16 M13 727.2H16 M10 732.2H16 M13 737.2H16 M13 742.2H16 M13 747.2H16 M13 752.2H16 M1 757.2H16 M13 762.2H16 M13 767.2H16 M13 772.2H16 M13 777.2H16 M10 782.2H16 M13 787.2H16 M13 792.2H16 M13 797.2H16 M13 802.2H16 M1 807.2H16 M13 812.2H16 M13 817.2H16 M13 822.2H16 M13 827.2H16 M10 832.2H16 M13 837.2H16 M13 842.2H16 M13 847.2H16 M13 852.2H16" stroke="#bdbdbd" stroke-width="1" shape-rendering="crispEdges"/><g font-family="Liberation Sans" font-size="9.5" fill="#c8c8c8"><text x="3" y="16.2">0</text><text x="3" y="66.2">2</text><text x="3" y="74.2">0</text><text x="3" y="116.2">4</text><text x="3" y="124.2">0</text><text x="3" y="166.2">6</text><text x="3" y="174.2">0</text><text x="3" y="216.2">8</text><text x="3" y="224.2">0</text><text x="3" y="266.2">1</text><text x="3" y="274.2">0</text><text x="3" y="282.2">0</text><text x="3" y="316.2">1</text><text x="3" y="324.2">2</text><text x="3" y="332.2">0</text><text x="3" y="366.2">1</text><text x="3" y="374.2">4</text><text x="3" y="382.2">0</text><text x="3" y="416.2">1</text><text x="3" y="424.2">6</text><text x="3" y="432.2">0</text><text x="3" y="466.2">1</text><text x="3" y="474.2">8</text><text x="3" y="482.2">0</text><text x="3" y="516.2">2</text><text x="3" y="524.2">0</text><text x="3" y="532.2">0</text><text x="3" y="566.2">2</text><text x="3" y="574.2">2</text><text x="3" y="582.2">0</text><text x="3" y="616.2">2</text><text x="3" y="624.2">4</text><text x="3" y="632.2">0</text><text x="3" y="666.2">2</text><text x="3" y="674.2">6</text><text x="3" y="682.2">0</text><text x="3" y="716.2">2</text><text x="3" y="724.2">8</text><text x="3" y="732.2">0</text><text x="3" y="766.2">3</text><text x="3" y="774.2">0</text><text x="3" y="782.2">0</text><text x="3" y="816.2">3</text><text x="3" y="824.2">2</text><text x="3" y="832.2">0</text></g></svg>
<div class="a" style="left:57px;top:95px;width:16px;height:16px;background:#262626"></div><svg class="a" style="left:57px;top:95px" width="16" height="16"><path d="M5.5 1V15M1 9.5H15" stroke="#aaa" stroke-dasharray="1 1"/></svg>
<!-- PAGE SPREAD -->
<div class="a" style="left:363px;top:118px;width:1174px;height:830px;background:#e7d6c1;border:1.5px solid #111;box-shadow:1px 1px 2px rgba(0,0,0,.08)"></div>
<div class="a" style="left:937px;top:118px;width:1.5px;height:830px;background:#111"></div>
<div class="a" style="left:962px;top:118px;width:1.5px;height:830px;background:#111"></div>
<!-- left page text -->
<div class="a" style="left:488px;top:307px;font:49px 'Liberation Serif';color:#6a6418;line-height:49px;-webkit-text-stroke:0.8px #6a6418">U</div>
<div class="a" style="left:520px;top:313px;font:16.5px 'Liberation Serif';color:#6a6418;line-height:19.5px;-webkit-text-stroke:0.5px #6a6418">t a<br>sa</div>
<div class="a" style="left:489px;top:352px;font:16.5px 'Liberation Serif';color:#6a6418;line-height:19.5px;-webkit-text-stroke:0.5px #6a6418">bus ali<br>hita qu</div>
<div class="a" style="left:489px;top:411px;font:16.5px 'Liberation Serif';color:#6a6418;line-height:19.5px;-webkit-text-stroke:0.5px #6a6418">Nem fu<br>dipsam<br>lis es c<br>eicipsa<br>conet i</div>
<!-- right page title script -->
<svg class="a" style="left:1248px;top:168px" width="24" height="16"><path d="M5 15Q8 5 12 5Q16 5 18 15" fill="none" stroke="#3d2b2c" stroke-width="4.5"/></svg>
<div class="a" style="left:1148px;top:181px;width:10px;height:1px;background:#7a6a60"></div>
<svg class="a" style="left:1300px;top:185px" width="30" height="40"><path d="M8 31Q11 14 21 10" fill="none" stroke="#3d2b2c" stroke-width="2.2"/><path d="M17 9Q23 7 25 10Q26 14 22 17Q22 13 19 12z" fill="#3d2b2c"/></svg>
<div class="a" style="left:1294px;top:232px;font:italic 78px 'Liberation Serif';color:#3d2b2c;transform:rotate(-7deg) scale(.87,1.08) skewX(-6deg);transform-origin:0 0;white-space:nowrap;letter-spacing:0px">ografie</div>
<!-- subtitle orange script -->
<div class="a" style="left:1313px;top:419px;font:italic 16.5px 'Liberation Serif';color:#e8843a;line-height:23px;transform:skewY(-6deg);transform-origin:0 0;white-space:nowrap;letter-spacing:-0.3px;-webkit-text-stroke:0.3px #e8843a">Der ultimative Ratgeber<br>für alle Hobby-<br>und Profifotografen.</div>
<!-- big camera -->
<svg class="a" style="left:1300px;top:550px" width="236" height="185">
 <defs><radialGradient id="csh" cx=".4" cy=".5" r=".5"><stop offset="0" stop-color="#000" stop-opacity=".18"/><stop offset="1" stop-color="#000" stop-opacity="0"/></radialGradient>
 <linearGradient id="cbody" x1="0" y1="0" x2="0" y2="1"><stop offset="0" stop-color="#3e333b"/><stop offset="1" stop-color="#2f262d"/></linearGradient></defs>
 <ellipse cx="95" cy="160" rx="110" ry="14" fill="url(#csh)"/>
 <path d="M16 33V16Q16 13 19 13H53Q56 13 56 16V33z" fill="#4a4245"/>
 <path d="M18 15H54V22H18z" fill="#6a6264"/>
 <path d="M0 34H150Q173 40 173 62V132Q173 150 150 152L40 158H0z" fill="url(#cbody)"/>
 <path d="M0 37H145" stroke="#5a5055" stroke-width="1.5"/>
 <path d="M0 140H100L92 156H0z" fill="#252024"/>
 <path d="M30 140H95" stroke="#6a6064" stroke-width="2"/>
 <ellipse cx="30" cy="80" rx="28" ry="37" fill="#dcd6d0"/>
 <g fill="#555"><circle cx="20" cy="60" r="1.2"/><circle cx="42" cy="70" r="1.2"/><circle cx="35" cy="95" r="1.2"/><circle cx="48" cy="85" r="1"/><circle cx="14" cy="100" r="1"/></g>
 <circle cx="80" cy="53" r="14" fill="#2a2428"/>
 <circle cx="80" cy="53" r="10" fill="#cfc4b8"/>
 <circle cx="80" cy="53" r="3.5" fill="#4a3a30"/>
 <path d="M92 113L108 88L135 128L112 142z" fill="#dcd6d0"/>
 <circle cx="127" cy="93" r="23" fill="#252023"/>
 <circle cx="127" cy="93" r="19" fill="#2c272a"/>
 <rect x="152" y="78" width="14" height="28" fill="#d8d2cc"/>
 <path d="M156 82V102M161 82V86M161 92V102" stroke="#3a3035" stroke-width="2"/>
 <path d="M155 42V30Q162 22 168 30V42" fill="none" stroke="#b8b0aa" stroke-width="2.5"/>
 <circle cx="18" cy="130" r="3" fill="#7a3a40"/>
</svg>
<!-- tiles -->
<div class="a" style="left:998px;top:741px;width:156px;height:156px;background:#faf8f4;box-shadow:0 0 2px rgba(0,0,0,.3)"></div>
<div class="a" style="left:1163px;top:741px;width:157px;height:156px;background:#faf8f4;box-shadow:0 0 2px rgba(0,0,0,.3)"></div>
<div class="a" style="left:1329px;top:741px;width:158px;height:156px;background:#faf8f4;box-shadow:0 0 2px rgba(0,0,0,.3)"></div>
<svg class="a" style="left:1000px;top:775px" width="152" height="120">
 <defs><linearGradient id="wd" x1="0" x2="1"><stop offset="0" stop-color="#c0702e"/><stop offset=".5" stop-color="#a85a2a"/><stop offset="1" stop-color="#9a4e26"/></linearGradient></defs>
 <rect width="152" height="120" fill="url(#wd)"/>
 <path d="M0 73H152M0 85H152M0 96H152M0 107H152M0 118H152M0 61H152M0 49H152" stroke="#5a2e14" stroke-width="1.4"/>
 <circle cx="88" cy="88" r="2.5" fill="#3a2010"/><circle cx="98" cy="104" r="2" fill="#3a2010"/><circle cx="138" cy="113" r="1.5" fill="#3a2010"/>
 <path d="M14 70L40 62L70 70L72 100L40 96L18 88z" fill="#252a30"/>
 <circle cx="43" cy="94" r="11" fill="#d8d0b8"/>
 <path d="M30 100L66 98L68 120H34z" fill="#46606e"/>
 <path d="M36 80L52 84L50 92L38 90z" fill="#b07a60"/>
</svg>
<svg class="a" style="left:1166px;top:775px" width="151" height="119">
 <defs><radialGradient id="g2a" cx=".3" cy=".65" r=".35"><stop offset="0" stop-color="#5a4020"/><stop offset="1" stop-color="#1c140c" stop-opacity="0"/></radialGradient><radialGradient id="g2b" cx=".85" cy=".5" r=".3"><stop offset="0" stop-color="#5a4420"/><stop offset="1" stop-color="#1c140c" stop-opacity="0"/></radialGradient></defs>
 <rect width="151" height="119" fill="#1e160e"/>
 <rect width="151" height="119" fill="url(#g2a)"/>
 <rect width="151" height="119" fill="url(#g2b)"/>
 <rect x="47" y="106" width="1.5" height="1.5" opacity=".55" fill="#d0a838"/><rect x="143" y="40" width="1.5" height="1.5" opacity=".55" fill="#b8902c"/><rect x="7" y="41" width="1.5" height="1.5" opacity=".55" fill="#6a5018"/><rect x="124" y="86" width="1.5" height="1.5" opacity=".55" fill="#6a5018"/><rect x="18" y="67" width="1.5" height="1.5" opacity=".55" fill="#6a5018"/><rect x="118" y="45" width="1.5" height="1.5" opacity=".55" fill="#8a6a20"/><rect x="63" y="53" width="1.5" height="1.5" opacity=".55" fill="#b8902c"/><rect x="122" y="49" width="1.5" height="1.5" opacity=".55" fill="#b8902c"/><rect x="43" y="81" width="1.5" height="1.5" opacity=".55" fill="#d0a838"/><rect x="97" y="69" width="1.5" height="1.5" opacity=".55" fill="#6a5018"/><rect x="34" y="20" width="1.5" height="1.5" opacity=".55" fill="#6a5018"/><rect x="122" y="15" width="1.5" height="1.5" opacity=".55" fill="#8a6a20"/><rect x="52" y="67" width="1.5" height="1.5" opacity=".55" fill="#8a6a20"/><rect x="111" y="61" width="1.5" height="1.5" opacity=".55" fill="#6a5018"/><rect x="53" y="27" width="1.5" height="1.5" opacity=".55" fill="#6a5018"/><rect x="107" y="58" width="1.5" height="1.5" opacity=".55" fill="#d0a838"/><rect x="23" y="70" width="1.5" height="1.5" opacity=".55" fill="#8a6a20"/><rect x="147" y="30" width="1.5" height="1.5" opacity=".55" fill="#b8902c"/><rect x="87" y="15" width="1.5" height="1.5" opacity=".55" fill="#8a6a20"/><rect x="120" y="30" width="1.5" height="1.5" opacity=".55" fill="#b8902c"/><rect x="42" y="58" width="1.5" height="1.5" opacity=".55" fill="#d0a838"/><rect x="124" y="72" width="1.5" height="1.5" opacity=".55" fill="#6a5018"/><rect x="79" y="99" width="1.5" height="1.5" opacity=".55" fill="#6a5018"/><rect x="128" y="56" width="1.5" height="1.5" opacity=".55" fill="#6a5018"/><rect x="50" y="25" width="1.5" height="1.5" opacity=".55" fill="#b8902c"/><rect x="101" y="24" width="1.5" height="1.5" opacity=".55" fill="#6a5018"/><rect x="41" y="53" width="1.5" height="1.5" opacity=".55" fill="#d0a838"/><rect x="60" y="56" width="1.5" height="1.5" opacity=".55" fill="#d0a838"/><rect x="56" y="76" width="1.5" height="1.5" opacity=".55" fill="#b8902c"/><rect x="41" y="94" width="1.5" height="1.5" opacity=".55" fill="#b8902c"/><rect x="141" y="56" width="1.5" height="1.5" opacity=".55" fill="#d0a838"/><rect x="90" y="61" width="1.5" height="1.5" opacity=".55" fill="#6a5018"/><rect x="99" y="109" width="1.5" height="1.5" opacity=".55" fill="#6a5018"/><rect x="27" y="49" width="1.5" height="1.5" opacity=".55" fill="#b8902c"/><rect x="94" y="3" width="1.5" height="1.5" opacity=".55" fill="#d0a838"/><rect x="13" y="92" width="1.5" height="1.5" opacity=".55" fill="#8a6a20"/><rect x="143" y="45" width="1.5" height="1.5" opacity=".55" fill="#d0a838"/><rect x="18" y="71" width="1.5" height="1.5" opacity=".55" fill="#b8902c"/><rect x="37" y="97" width="1.5" height="1.5" opacity=".55" fill="#8a6a20"/><rect x="149" y="78" width="1.5" height="1.5" opacity=".55" fill="#6a5018"/><rect x="114" y="42" width="1.5" height="1.5" opacity=".55" fill="#6a5018"/><rect x="53" y="76" width="1.5" height="1.5" opacity=".55" fill="#b8902c"/><rect x="138" y="54" width="1.5" height="1.5" opacity=".55" fill="#6a5018"/><rect x="36" y="107" width="1.5" height="1.5" opacity=".55" fill="#8a6a20"/><rect x="115" y="83" width="1.5" height="1.5" opacity=".55" fill="#d0a838"/><rect x="55" y="59" width="1.5" height="1.5" opacity=".55" fill="#6a5018"/><rect x="78" y="68" width="1.5" height="1.5" opacity=".55" fill="#8a6a20"/><rect x="120" y="83" width="1.5" height="1.5" opacity=".55" fill="#d0a838"/><rect x="46" y="91" width="1.5" height="1.5" opacity=".55" fill="#6a5018"/><rect x="120" y="47" width="1.5" height="1.5" opacity=".55" fill="#d0a838"/><rect x="76" y="63" width="1.5" height="1.5" opacity=".55" fill="#8a6a20"/><rect x="92" y="86" width="1.5" height="1.5" opacity=".55" fill="#8a6a20"/><rect x="77" y="95" width="1.5" height="1.5" opacity=".55" fill="#8a6a20"/><rect x="140" y="35" width="1.5" height="1.5" opacity=".55" fill="#8a6a20"/><rect x="46" y="69" width="1.5" height="1.5" opacity=".55" fill="#8a6a20"/><rect x="6" y="52" width="1.5" height="1.5" opacity=".55" fill="#d0a838"/><rect x="134" y="13" width="1.5" height="1.5" opacity=".55" fill="#d0a838"/><rect x="26" y="61" width="1.5" height="1.5" opacity=".55" fill="#d0a838"/><rect x="100" y="71" width="1.5" height="1.5" opacity=".55" fill="#d0a838"/><rect x="25" y="87" width="1.5" height="1.5" opacity=".55" fill="#6a5018"/><rect x="126" y="63" width="1.5" height="1.5" opacity=".55" fill="#6a5018"/><rect x="124" y="51" width="1.5" height="1.5" opacity=".55" fill="#6a5018"/><rect x="62" y="43" width="1.5" height="1.5" opacity=".55" fill="#d0a838"/><rect x="89" y="40" width="1.5" height="1.5" opacity=".55" fill="#b8902c"/><rect x="82" y="23" width="1.5" height="1.5" opacity=".55" fill="#b8902c"/><rect x="127" y="50" width="1.5" height="1.5" opacity=".55" fill="#8a6a20"/><rect x="83" y="43" width="1.5" height="1.5" opacity=".55" fill="#b8902c"/><rect x="54" y="94" width="1.5" height="1.5" opacity=".55" fill="#b8902c"/><rect x="107" y="54" width="1.5" height="1.5" opacity=".55" fill="#b8902c"/><rect x="36" y="91" width="1.5" height="1.5" opacity=".55" fill="#6a5018"/><rect x="127" y="48" width="1.5" height="1.5" opacity=".55" fill="#8a6a20"/><rect x="54" y="104" width="1.5" height="1.5" opacity=".55" fill="#b8902c"/><rect x="140" y="115" width="1.5" height="1.5" opacity=".55" fill="#8a6a20"/><rect x="46" y="72" width="1.5" height="1.5" opacity=".55" fill="#6a5018"/><rect x="139" y="69" width="1.5" height="1.5" opacity=".55" fill="#d0a838"/><rect x="25" y="55" width="1.5" height="1.5" opacity=".55" fill="#b8902c"/><rect x="94" y="70" width="1.5" height="1.5" opacity=".55" fill="#b8902c"/><rect x="69" y="41" width="1.5" height="1.5" opacity=".55" fill="#b8902c"/><rect x="130" y="69" width="1.5" height="1.5" opacity=".55" fill="#b8902c"/><rect x="51" y="67" width="1.5" height="1.5" opacity=".55" fill="#6a5018"/><rect x="119" y="88" width="1.5" height="1.5" opacity=".55" fill="#d0a838"/><rect x="29" y="91" width="1.5" height="1.5" opacity=".55" fill="#d0a838"/><rect x="117" y="77" width="1.5" height="1.5" opacity=".55" fill="#d0a838"/><rect x="35" y="81" width="1.5" height="1.5" opacity=".55" fill="#b8902c"/><rect x="121" y="27" width="1.5" height="1.5" opacity=".55" fill="#b8902c"/><rect x="39" y="72" width="1.5" height="1.5" opacity=".55" fill="#6a5018"/><rect x="100" y="23" width="1.5" height="1.5" opacity=".55" fill="#6a5018"/><rect x="41" y="69" width="1.5" height="1.5" opacity=".55" fill="#6a5018"/><rect x="149" y="76" width="1.5" height="1.5" opacity=".55" fill="#d0a838"/><rect x="15" y="93" width="1.5" height="1.5" opacity=".55" fill="#6a5018"/><rect x="138" y="63" width="1.5" height="1.5" opacity=".55" fill="#d0a838"/><rect x="42" y="66" width="1.5" height="1.5" opacity=".55" fill="#6a5018"/><rect x="127" y="78" width="1.5" height="1.5" opacity=".55" fill="#b8902c"/><rect x="65" y="66" width="1.5" height="1.5" opacity=".55" fill="#d0a838"/><rect x="145" y="97" width="1.5" height="1.5" opacity=".55" fill="#6a5018"/><rect x="27" y="40" width="1.5" height="1.5" opacity=".55" fill="#b8902c"/><rect x="136" y="9" width="1.5" height="1.5" opacity=".55" fill="#6a5018"/><rect x="69" y="109" width="1.5" height="1.5" opacity=".55" fill="#b8902c"/><rect x="102" y="52" width="1.5" height="1.5" opacity=".55" fill="#6a5018"/><rect x="47" y="80" width="1.5" height="1.5" opacity=".55" fill="#b8902c"/><rect x="134" y="63" width="1.5" height="1.5" opacity=".55" fill="#6a5018"/><rect x="73" y="22" width="1.5" height="1.5" opacity=".55" fill="#d0a838"/><rect x="126" y="51" width="1.5" height="1.5" opacity=".55" fill="#8a6a20"/><rect x="74" y="101" width="1.5" height="1.5" opacity=".55" fill="#b8902c"/><rect x="90" y="38" width="1.5" height="1.5" opacity=".55" fill="#8a6a20"/><rect x="53" y="59" width="1.5" height="1.5" opacity=".55" fill="#8a6a20"/><rect x="113" y="29" width="1.5" height="1.5" opacity=".55" fill="#6a5018"/><rect x="44" y="109" width="1.5" height="1.5" opacity=".55" fill="#d0a838"/><rect x="81" y="28" width="1.5" height="1.5" opacity=".55" fill="#6a5018"/><rect x="100" y="90" width="1.5" height="1.5" opacity=".55" fill="#8a6a20"/><rect x="20" y="91" width="1.5" height="1.5" opacity=".55" fill="#6a5018"/><rect x="135" y="89" width="1.5" height="1.5" opacity=".55" fill="#8a6a20"/><rect x="58" y="100" width="1.5" height="1.5" opacity=".55" fill="#6a5018"/><rect x="144" y="39" width="1.5" height="1.5" opacity=".55" fill="#6a5018"/><rect x="8" y="49" width="1.5" height="1.5" opacity=".55" fill="#8a6a20"/><rect x="124" y="83" width="1.5" height="1.5" opacity=".55" fill="#d0a838"/><rect x="84" y="56" width="1.5" height="1.5" opacity=".55" fill="#d0a838"/><rect x="21" y="56" width="1.5" height="1.5" opacity=".55" fill="#d0a838"/><rect x="137" y="41" width="1.5" height="1.5" opacity=".55" fill="#d0a838"/><rect x="24" y="78" width="1.5" height="1.5" opacity=".55" fill="#8a6a20"/><rect x="113" y="49" width="1.5" height="1.5" opacity=".55" fill="#6a5018"/><rect x="47" y="61" width="1.5" height="1.5" opacity=".55" fill="#6a5018"/><rect x="121" y="37" width="1.5" height="1.5" opacity=".55" fill="#b8902c"/><rect x="10" y="80" width="1.5" height="1.5" opacity=".55" fill="#6a5018"/><rect x="91" y="91" width="1.5" height="1.5" opacity=".55" fill="#8a6a20"/><rect x="106" y="11" width="1.5" height="1.5" opacity=".55" fill="#b8902c"/><rect x="87" y="62" width="1.5" height="1.5" opacity=".55" fill="#8a6a20"/><rect x="149" y="21" width="1.5" height="1.5" opacity=".55" fill="#8a6a20"/><rect x="58" y="111" width="1.5" height="1.5" opacity=".55" fill="#b8902c"/><rect x="136" y="44" width="1.5" height="1.5" opacity=".55" fill="#b8902c"/><rect x="36" y="99" width="1.5" height="1.5" opacity=".55" fill="#b8902c"/><rect x="135" y="79" width="1.5" height="1.5" opacity=".55" fill="#d0a838"/><rect x="69" y="81" width="1.5" height="1.5" opacity=".55" fill="#d0a838"/><rect x="141" y="61" width="1.5" height="1.5" opacity=".55" fill="#6a5018"/><rect x="39" y="82" width="1.5" height="1.5" opacity=".55" fill="#6a5018"/><rect x="108" y="88" width="1.5" height="1.5" opacity=".55" fill="#b8902c"/><rect x="52" y="68" width="1.5" height="1.5" opacity=".55" fill="#6a5018"/><rect x="53" y="69" width="1.5" height="1.5" opacity=".55" fill="#d0a838"/><rect x="117" y="30" width="1.5" height="1.5" opacity=".55" fill="#6a5018"/><rect x="36" y="111" width="1.5" height="1.5" opacity=".55" fill="#d0a838"/><rect x="30" y="102" width="1.5" height="1.5" opacity=".55" fill="#b8902c"/><rect x="114" y="24" width="1.5" height="1.5" opacity=".55" fill="#b8902c"/><rect x="38" y="38" width="1.5" height="1.5" opacity=".55" fill="#8a6a20"/><rect x="107" y="15" width="1.5" height="1.5" opacity=".55" fill="#8a6a20"/><rect x="120" y="45" width="1.5" height="1.5" opacity=".55" fill="#8a6a20"/><rect x="73" y="58" width="1.5" height="1.5" opacity=".55" fill="#6a5018"/><rect x="101" y="43" width="1.5" height="1.5" opacity=".55" fill="#6a5018"/><rect x="7" y="80" width="1.5" height="1.5" opacity=".55" fill="#b8902c"/><rect x="134" y="74" width="1.5" height="1.5" opacity=".55" fill="#6a5018"/><rect x="34" y="90" width="1.5" height="1.5" opacity=".55" fill="#6a5018"/><rect x="134" y="66" width="1.5" height="1.5" opacity=".55" fill="#6a5018"/><rect x="28" y="74" width="1.5" height="1.5" opacity=".55" fill="#d0a838"/><rect x="7" y="90" width="1.5" height="1.5" opacity=".55" fill="#b8902c"/><rect x="104" y="114" width="1.5" height="1.5" opacity=".55" fill="#b8902c"/><rect x="62" y="102" width="1.5" height="1.5" opacity=".55" fill="#b8902c"/><rect x="89" y="30" width="1.5" height="1.5" opacity=".55" fill="#b8902c"/><rect x="51" y="90" width="1.5" height="1.5" opacity=".55" fill="#6a5018"/><rect x="116" y="29" width="1.5" height="1.5" opacity=".55" fill="#8a6a20"/><rect x="35" y="67" width="1.5" height="1.5" opacity=".55" fill="#6a5018"/><rect x="132" y="18" width="1.5" height="1.5" opacity=".55" fill="#8a6a20"/><rect x="32" y="68" width="1.5" height="1.5" opacity=".55" fill="#d0a838"/><rect x="115" y="81" width="1.5" height="1.5" opacity=".55" fill="#6a5018"/><rect x="87" y="36" width="1.5" height="1.5" opacity=".55" fill="#6a5018"/><rect x="36" y="102" width="1.5" height="1.5" opacity=".55" fill="#d0a838"/><rect x="146" y="28" width="1.5" height="1.5" opacity=".55" fill="#b8902c"/><rect x="17" y="51" width="1.5" height="1.5" opacity=".55" fill="#b8902c"/><rect x="149" y="97" width="1.5" height="1.5" opacity=".55" fill="#8a6a20"/><rect x="18" y="77" width="1.5" height="1.5" opacity=".55" fill="#6a5018"/><rect x="135" y="118" width="1.5" height="1.5" opacity=".55" fill="#8a6a20"/><rect x="70" y="82" width="1.5" height="1.5" opacity=".55" fill="#6a5018"/><rect x="136" y="78" width="1.5" height="1.5" opacity=".55" fill="#8a6a20"/><rect x="71" y="108" width="1.5" height="1.5" opacity=".55" fill="#b8902c"/><rect x="150" y="68" width="1.5" height="1.5" opacity=".55" fill="#b8902c"/><rect x="41" y="75" width="1.5" height="1.5" opacity=".55" fill="#d0a838"/><rect x="41" y="62" width="1.5" height="1.5" opacity=".55" fill="#b8902c"/><rect x="119" y="4" width="1.5" height="1.5" opacity=".55" fill="#d0a838"/><rect x="60" y="75" width="1.5" height="1.5" opacity=".55" fill="#b8902c"/><rect x="137" y="31" width="1.5" height="1.5" opacity=".55" fill="#8a6a20"/><rect x="34" y="76" width="1.5" height="1.5" opacity=".55" fill="#b8902c"/><rect x="96" y="97" width="1.5" height="1.5" opacity=".55" fill="#8a6a20"/><rect x="26" y="93" width="1.5" height="1.5" opacity=".55" fill="#b8902c"/><rect x="107" y="51" width="1.5" height="1.5" opacity=".55" fill="#6a5018"/><rect x="37" y="101" width="1.5" height="1.5" opacity=".55" fill="#6a5018"/><rect x="107" y="75" width="1.5" height="1.5" opacity=".55" fill="#b8902c"/><rect x="41" y="52" width="1.5" height="1.5" opacity=".55" fill="#d0a838"/><rect x="109" y="71" width="1.5" height="1.5" opacity=".55" fill="#6a5018"/><rect x="45" y="77" width="1.5" height="1.5" opacity=".55" fill="#8a6a20"/><rect x="124" y="94" width="1.5" height="1.5" opacity=".55" fill="#6a5018"/><rect x="32" y="72" width="1.5" height="1.5" opacity=".55" fill="#b8902c"/><rect x="134" y="91" width="1.5" height="1.5" opacity=".55" fill="#8a6a20"/><rect x="37" y="65" width="1.5" height="1.5" opacity=".55" fill="#8a6a20"/><rect x="114" y="68" width="1.5" height="1.5" opacity=".55" fill="#b8902c"/><rect x="29" y="88" width="1.5" height="1.5" opacity=".55" fill="#b8902c"/><rect x="123" y="49" width="1.5" height="1.5" opacity=".55" fill="#6a5018"/><rect x="70" y="82" width="1.5" height="1.5" opacity=".55" fill="#8a6a20"/><rect x="126" y="95" width="1.5" height="1.5" opacity=".55" fill="#8a6a20"/><rect x="61" y="105" width="1.5" height="1.5" opacity=".55" fill="#d0a838"/><rect x="146" y="35" width="1.5" height="1.5" opacity=".55" fill="#d0a838"/><rect x="39" y="118" width="1.5" height="1.5" opacity=".55" fill="#6a5018"/><rect x="17" y="77" width="1.5" height="1.5" opacity=".55" fill="#b8902c"/><rect x="135" y="15" width="1.5" height="1.5" opacity=".55" fill="#d0a838"/><rect x="42" y="83" width="1.5" height="1.5" opacity=".55" fill="#6a5018"/><rect x="149" y="51" width="1.5" height="1.5" opacity=".55" fill="#b8902c"/><rect x="71" y="98" width="1.5" height="1.5" opacity=".55" fill="#b8902c"/><rect x="127" y="68" width="1.5" height="1.5" opacity=".55" fill="#b8902c"/><rect x="55" y="103" width="1.5" height="1.5" opacity=".55" fill="#d0a838"/><rect x="6" y="82" width="1.5" height="1.5" opacity=".55" fill="#d0a838"/><rect x="129" y="57" width="1.5" height="1.5" opacity=".55" fill="#d0a838"/><rect x="45" y="40" width="1.5" height="1.5" opacity=".55" fill="#6a5018"/><rect x="138" y="75" width="1.5" height="1.5" opacity=".55" fill="#6a5018"/><rect x="61" y="91" width="1.5" height="1.5" opacity=".55" fill="#d0a838"/><rect x="95" y="46" width="1.5" height="1.5" opacity=".55" fill="#6a5018"/><rect x="61" y="112" width="1.5" height="1.5" opacity=".55" fill="#6a5018"/><rect x="137" y="22" width="1.5" height="1.5" opacity=".55" fill="#8a6a20"/><rect x="30" y="95" width="1.5" height="1.5" opacity=".55" fill="#8a6a20"/><rect x="99" y="79" width="1.5" height="1.5" opacity=".55" fill="#d0a838"/><rect x="43" y="90" width="1.5" height="1.5" opacity=".55" fill="#6a5018"/><rect x="130" y="57" width="1.5" height="1.5" opacity=".55" fill="#8a6a20"/><rect x="44" y="70" width="1.5" height="1.5" opacity=".55" fill="#6a5018"/><rect x="148" y="89" width="1.5" height="1.5" opacity=".55" fill="#b8902c"/><rect x="32" y="106" width="1.5" height="1.5" opacity=".55" fill="#b8902c"/><rect x="0" y="91" width="1.5" height="1.5" opacity=".55" fill="#d0a838"/><rect x="126" y="60" width="1.5" height="1.5" opacity=".55" fill="#8a6a20"/><rect x="1" y="112" width="1.5" height="1.5" opacity=".55" fill="#b8902c"/><rect x="117" y="86" width="1.5" height="1.5" opacity=".55" fill="#6a5018"/><rect x="73" y="93" width="1.5" height="1.5" opacity=".55" fill="#8a6a20"/><rect x="56" y="70" width="1.5" height="1.5" opacity=".55" fill="#b8902c"/><rect x="136" y="79" width="1.5" height="1.5" opacity=".55" fill="#8a6a20"/><rect x="50" y="107" width="1.5" height="1.5" opacity=".55" fill="#6a5018"/><rect x="86" y="58" width="1.5" height="1.5" opacity=".55" fill="#d0a838"/><rect x="52" y="45" width="1.5" height="1.5" opacity=".55" fill="#8a6a20"/><rect x="100" y="70" width="1.5" height="1.5" opacity=".55" fill="#b8902c"/><rect x="50" y="64" width="1.5" height="1.5" opacity=".55" fill="#b8902c"/><rect x="130" y="47" width="1.5" height="1.5" opacity=".55" fill="#d0a838"/><rect x="66" y="89" width="1.5" height="1.5" opacity=".55" fill="#8a6a20"/><rect x="137" y="13" width="1.5" height="1.5" opacity=".55" fill="#b8902c"/><rect x="22" y="42" width="1.5" height="1.5" opacity=".55" fill="#d0a838"/><rect x="103" y="90" width="1.5" height="1.5" opacity=".55" fill="#b8902c"/><rect x="109" y="72" width="1.5" height="1.5" opacity=".55" fill="#b8902c"/>
</svg>
<div class="a" style="left:1329px;top:747px;width:158px;font:italic 18px 'Liberation Serif';color:#cf5a32;text-align:center;letter-spacing:-0.3px">Ausrüstung</div>
<svg class="a" style="left:1332px;top:775px" width="152" height="120">
 <defs><linearGradient id="g3" x1="0" y1="0" x2="0" y2="1"><stop offset="0" stop-color="#1a2410"/><stop offset=".2" stop-color="#2e4218"/><stop offset=".28" stop-color="#5a4028"/><stop offset="1" stop-color="#6a4a2c"/></linearGradient>
 <radialGradient id="lens" cx=".5" cy=".5" r=".5"><stop offset="0" stop-color="#1a2a3a"/><stop offset=".45" stop-color="#22384a"/><stop offset=".55" stop-color="#9aa6ae"/><stop offset=".75" stop-color="#5a646c"/><stop offset=".85" stop-color="#b0b8c0"/><stop offset="1" stop-color="#6a747c"/></radialGradient></defs>
 <rect width="152" height="120" fill="url(#g3)"/>
 <path d="M130 0H152V110L140 60z" fill="#3a5a22" opacity=".8"/>
 <path d="M95 20L128 28L148 110L120 120H90z" fill="#8a6640"/>
 <path d="M0 88L45 78L70 120H0z" fill="#121212"/>
 <path d="M2 72L10 40L42 22L58 30L78 12L130 38L138 50L124 96L80 120H62L8 96z" fill="#8aa2bc"/>
 <path d="M4 70L14 44L40 30L46 36L20 80z" fill="#6e8aa8"/>
 <path d="M82 16L130 38L122 64L76 42z" fill="#7a7f80"/>
 <path d="M88 22L124 38L118 56L84 40z" fill="#9a9890"/>
 <circle cx="76" cy="56" r="27" fill="url(#lens)"/>
 <path d="M110 100L124 92L130 104L116 110z" fill="#9ab0c4"/>
 <circle cx="40" cy="116" r="3" fill="none" stroke="#bbb" stroke-width="1.5"/>
</svg>
<!-- LEFT TOOLBAR -->
<div class="a" style="left:0;top:76px;width:55px;height:905px;background:#4a4a4a"></div>
<div class="a" style="left:0;top:76px;width:55px;height:12px;background:#383838;border-bottom:1px solid #2a2a2a"></div>
<svg class="a" style="left:3px;top:79px" width="10" height="6"><path d="M4 0V6L0 3zM9 0V6L5 3z" fill="#bbb"/></svg>
<div class="a" style="left:18px;top:91px;width:20px;height:4px;background:repeating-linear-gradient(90deg,#151515 0 1px,#4a4a4a 1px 2px)"></div>
<div class="a" style="left:3px;top:104px;width:23px;height:19px;background:#383838;border-radius:2px"></div>
<svg class="a" style="left:0;top:100px" width="55" height="360" fill="none" stroke="#cfcfcf" stroke-width="1.1">
 <!-- selection -->
 <path d="M10.5 5.5V20L14 16.5L16.5 22L18.5 21L16 15.5H20.5z" stroke="#ddd"/>
 <path d="M36 6V20.5L39.5 17L42 22.5L44 21.5L41.5 16H46z" fill="#c8c8c8" stroke="#c8c8c8"/>
 <!-- page tool -->
 <path d="M9 27.5H17L21 31.5V42.5H9z" fill="#c8c8c8" stroke="#c8c8c8"/><path d="M17 36V43L19 41L20.5 44L21.5 43.5L20 40.5H23z" fill="#ddd" stroke="#444" stroke-width=".5"/>
 <!-- gap tool -->
 <path d="M30.5 28V42M49.5 28V42" stroke="#c8c8c8" stroke-width="1.6"/><path d="M33 35H47" stroke="#ddd" stroke-width="1.5"/><path d="M33 35L37 31.5V38.5zM47 35L43 31.5V38.5z" fill="#ddd"/>
 <!-- content collector -->
 <path d="M8.5 53V64.5H22.5V53" stroke="#c8c8c8" stroke-width="1.5"/><path d="M11 59H13M15 59H17M19 59H21M11 62H13M15 62H17M19 62H21" stroke="#ddd" stroke-width="1.5"/><path d="M11 49L15 53M15 50V53H12" stroke="#ddd" stroke-width="1.3"/>
 <path d="M33.5 53V64.5H47.5V53" stroke="#c8c8c8" stroke-width="1.5"/><path d="M36 59H38M40 59H42M44 59H46M36 62H38M40 62H42M44 62H46" stroke="#ddd" stroke-width="1.5"/><path d="M41 53L46 48M43 48H46V51" stroke="#ddd" stroke-width="1.3"/>
 <!-- separator -->
 <path d="M0 69.5H55" stroke="#3a3a3a"/>
 <!-- type -->
 <text x="8" y="91" font-family="Liberation Serif" font-size="19" fill="#d8d8d8" stroke="none">T</text><path d="M22 92L25 89V92z" fill="#ccc" stroke="none"/>
 <path d="M33 90L46 77" stroke="#d0d0d0" stroke-width="1.3"/>
 <!-- pen -->
 <path d="M8 111L12 100L17 95L21 99L16 104z" fill="#c8c8c8" stroke="#c8c8c8"/><path d="M10 109L13 106" stroke="#444"/><path d="M22 112L25 109V112z" fill="#ccc" stroke="none"/>
 <path d="M33 110L35 105L44 96L47 99L38 108z" fill="#c0c0c0" stroke="#c0c0c0"/><path d="M47 112L50 109V112z" fill="#ccc" stroke="none"/>
 <!-- frame -->
 <rect x="8.5" y="118.5" width="14" height="12" stroke="#ccc"/><path d="M8.5 118.5L22.5 130.5M22.5 118.5L8.5 130.5" stroke="#ccc"/><path d="M23 133L26 130V133z" fill="#ccc" stroke="none"/>
 <rect x="33.5" y="118.5" width="14" height="12" fill="#8a8a8a" stroke="#ccc"/><path d="M48 133L51 130V133z" fill="#ccc" stroke="none"/>
 <path d="M0 140.5H55" stroke="#3a3a3a"/>
 <!-- scissors -->
 <circle cx="20" cy="149" r="2.6" stroke="#ddd" stroke-width="1.4"/><circle cx="20" cy="158.5" r="2.6" stroke="#ddd" stroke-width="1.4"/><path d="M17.5 150.5L7 156.5M17.5 157L7 151" stroke="#ddd" stroke-width="1.4"/>
 <path d="M32.5 160.5L36.5 150.5H48.5L44.5 160.5z" fill="#6a6a6a" stroke="#ccc"/><path d="M36 159L41 151" stroke="#999" stroke-width="2"/><path d="M36 146.5H45M42.5 144L45 146.5L42.5 149" stroke="#ddd" stroke-width="1.1"/><path d="M48 162L51 159V162z" fill="#ccc" stroke="none"/>
 <!-- gradient -->
 <rect x="8.5" y="169.5" width="14" height="10" fill="url(#g1)" stroke="#ccc"/>
 <rect x="32.5" y="169.5" width="15" height="11" fill="#bbb" stroke="none"/><g fill="#444" stroke="none"><rect x="35.5" y="169.5" width="3" height="3.7"/><rect x="41.5" y="169.5" width="3" height="3.7"/><rect x="32.5" y="173.2" width="3" height="3.7"/><rect x="38.5" y="173.2" width="3" height="3.7"/><rect x="44.5" y="173.2" width="3" height="3.7"/><rect x="35.5" y="176.9" width="3" height="3.6"/><rect x="41.5" y="176.9" width="3" height="3.6"/></g>
 <path d="M0 189.5H55" stroke="#3a3a3a"/>
 <!-- note -->
 <path d="M8.5 197.5H22.5V206L18 210.5H8.5z" fill="#c8c8c8" stroke="#c8c8c8"/><path d="M11 201H20M11 204H20M11 207H16" stroke="#555"/>
 <path d="M34 210L43 201M42 198L46 202M44 196L48 200" stroke="#ccc" stroke-width="1.5"/><path d="M33 211H48M35 208.5H37M39 208.5H41" stroke="#ccc" stroke-dasharray="1 1"/>
 <!-- hand -->
 <path d="M10 228L8 221L9.5 220.5L12 225V218L14 217.5V224V216.5L16 216V224V217L18 217V224L19 220H21L20 228L17 233H12z" fill="#d0d0d0" stroke="#d0d0d0" stroke-width=".6"/>
 <circle cx="39" cy="222" r="4.5" stroke="#ddd" stroke-width="1.8"/><path d="M42 225.5L47 231" stroke="#ddd" stroke-width="2.5"/>
 <path d="M0 237.5H55" stroke="#3a3a3a"/>
 <defs><linearGradient id="g1"><stop offset="0" stop-color="#fff"/><stop offset="1" stop-color="#222"/></linearGradient></defs>
</svg>
<!-- swatches -->
<div class="a" style="left:19px;top:359px;width:27px;height:25px;background:#fff;border:1px solid #ccc"></div>
<div class="a" style="left:25px;top:365px;width:14px;height:13px;background:#555"></div><svg class="a" style="left:19px;top:359px" width="27" height="25"><path d="M2 24L26 1" stroke="#d8401e" stroke-width="3"/></svg>
<div class="a" style="left:7px;top:345px;width:27px;height:23px;background:#4a3b40;border:1px solid #999;box-shadow:0 0 0 1px #333"></div>
<svg class="a" style="left:37px;top:344px" width="12" height="10"><path d="M2 3H8V8M0 3L2 1V5M8 10L6 8H10" stroke="#ccc" fill="none" stroke-width="1.2"/></svg>
<svg class="a" style="left:5px;top:376px" width="12" height="12"><rect x="4.5" y="4.5" width="7" height="7" fill="#fff" stroke="#222"/><rect x="0.5" y="0.5" width="7" height="7" fill="#333" stroke="#ddd"/><path d="M5 10L10 5" stroke="#d8401e"/></svg>
<div class="a" style="left:8px;top:389px;width:17px;height:17px;background:#363636"></div><svg class="a" style="left:9px;top:391px" width="38" height="14"><rect x="2.5" y="1.5" width="10" height="10" fill="none" stroke="#ddd" stroke-width="1.3"/><text x="23" y="12" font-family="Liberation Serif" font-size="13" font-weight="bold" fill="#ddd">T</text></svg>
<div class="a" style="left:3px;top:412px;width:16px;height:16px;background:#363636"></div>
<svg class="a" style="left:4px;top:413px" width="48" height="14"><rect x="2.5" y="2.5" width="9" height="9" fill="#4a3b40" stroke="#ccc"/><rect x="19" y="2" width="10" height="10" fill="url(#g2)"/><rect x="35.5" y="1.5" width="10" height="10" fill="#fff"/><path d="M36 11L45 2" stroke="#d8401e" stroke-width="1.6"/><defs><linearGradient id="g2"><stop offset="0" stop-color="#eee"/><stop offset="1" stop-color="#333"/></linearGradient></defs></svg>
<div class="a" style="left:29px;top:434px;width:23px;height:18px;background:#363636"></div>
<svg class="a" style="left:8px;top:437px" width="44" height="14"><rect x="2.5" y="1.5" width="11" height="11" fill="none" stroke="#ccc" stroke-width="1.2"/><rect x="5" y="6" width="6" height="4" fill="#ccc"/><rect x="25.5" y="1.5" width="13" height="11" fill="none" stroke="#ddd" stroke-width="1.4"/><path d="M26 4.5H38" stroke="#ddd"/><path d="M38 13L41 10V13z" fill="#ccc"/></svg>
<div class="a" style="left:0;top:451px;width:55px;height:1px;background:#3a3a3a"></div>
<!-- AUSRICHTEN PANEL -->
<div class="a" style="left:122px;top:428px;width:209px;height:368px;background:#4a4a4a;border:1px solid #262626;border-radius:3px 3px 0 0;box-shadow:0 0 3px rgba(0,0,0,.3)"></div>
<div class="a" style="left:123px;top:429px;width:207px;height:13px;background:#2f2f2f;border-radius:3px 3px 0 0"></div>
<svg class="a" style="left:127px;top:432px" width="200" height="8"><path d="M1 1L6 6M6 1L1 6" stroke="#ccc" stroke-width="1.3"/><path d="M195 1V6L191.5 3.5zM199 1V6L195.5 3.5z" fill="#bbb"/></svg>
<div class="a" style="left:123px;top:442px;width:207px;height:17px;background:#383838"></div>
<div class="a" style="left:123px;top:442px;width:75px;height:17px;background:#4a4a4a"></div>
<div class="a" style="left:199px;top:442px;width:66px;height:17px;background:#3e3e3e;border-right:1px solid #333"></div>
<svg class="a" style="left:127px;top:444px" width="8" height="12"><path d="M1 4.5L4 1.5L7 4.5M1 7.5L4 10.5L7 7.5" stroke="#ccc" fill="none" stroke-width="1.1"/></svg>
<div class="a pt" style="left:136px;top:444px">Ausrichten</div>
<div class="a pt" style="left:205px;top:444px;color:#9a9a9a">Pathfinder</div>
<svg class="a" style="left:312px;top:446px" width="15" height="9"><path d="M0 2H4L2 4z" fill="#ddd"/><path d="M5 1.5H14M5 3.5H14M5 5.5H14M5 7.5H14" stroke="#ddd"/></svg>
<div class="a ps" style="left:127px;top:465px">Objekte ausrichten:</div>
<svg class="a" style="left:125px;top:479px" width="195" height="20" fill="#c8c8c8" stroke="#c8c8c8">
 <path d="M7.5 2V17" fill="none"/><rect x="9" y="3" width="8" height="5" stroke="none" fill="#bbb"/><rect x="9.5" y="10.5" width="10" height="5" fill="none"/>
 <path d="M46.5 1V17" fill="none"/><rect x="42" y="3" width="9" height="5" stroke="none" fill="#bbb"/><rect x="41.5" y="10.5" width="10" height="5" fill="none"/>
 <path d="M81.5 2V17" fill="none"/><rect x="72" y="3" width="8" height="5" stroke="none" fill="#bbb"/><rect x="70.5" y="10.5" width="10" height="5" fill="none"/>
 <path d="M113 2.5H127" fill="none"/><rect x="114.5" y="4.5" width="4" height="11" fill="none"/><rect x="120" y="4" width="5" height="7" stroke="none" fill="#bbb"/>
 <path d="M144 9.5H158" fill="none"/><rect x="146.5" y="3.5" width="4" height="12" fill="none"/><rect x="152" y="6" width="5" height="7" stroke="none" fill="#bbb"/>
 <path d="M176 16.5H190" fill="none"/><rect x="177.5" y="4.5" width="4" height="11" fill="none"/><rect x="183" y="8" width="5" height="7" stroke="none" fill="#bbb"/>
</svg>
<div class="a" style="left:127px;top:500px;width:196px;height:1px;background:#3a3a3a;border-bottom:1px solid #555"></div>
<div class="a ps" style="left:127px;top:505px">Objekte verteilen:</div>
<svg class="a" style="left:125px;top:519px" width="195" height="20" fill="none" stroke="#c8c8c8">
 <path d="M8 2.5H22M8 10.5H22"/><rect x="12" y="3" width="6" height="4" fill="#bbb" stroke="none"/><rect x="10.5" y="11.5" width="9" height="4"/>
 <path d="M40 6.5H54M40 13.5H54"/><rect x="44" y="3" width="6" height="4" fill="#bbb" stroke="none"/><rect x="42.5" y="11.5" width="9" height="4"/>
 <path d="M72 8.5H86M72 16.5H86"/><rect x="76" y="3" width="6" height="5" fill="#bbb" stroke="none"/><rect x="74.5" y="10.5" width="9" height="5"/>
 <path d="M114.5 2V17"/><rect x="115.5" y="5.5" width="4" height="9"/><rect x="121" y="6" width="4" height="6" fill="#bbb" stroke="none"/>
 <path d="M151.5 2V17"/><rect x="146.5" y="5.5" width="4" height="9"/><rect x="152" y="6" width="4" height="6" fill="#bbb" stroke="none"/>
 <path d="M190.5 2V17"/><rect x="185.5" y="5.5" width="4" height="9"/><rect x="179" y="6" width="5" height="6" fill="#bbb" stroke="none"/>
</svg>
<div class="a pcb" style="left:129px;top:542px"></div>
<div class="a ps" style="left:145px;top:543px">Abstand verwenden</div>
<div class="a pspin" style="left:240px;top:543px"></div>
<div class="a pinp" style="left:254px;top:543px;width:48px;color:#8a8a8a">0 mm</div>
<div class="a ps" style="left:176px;top:567px">Ausrichten an:</div>
<svg class="a" style="left:241px;top:564px" width="24" height="19"><path d="M1.5 1V17" stroke="#ccc"/><rect x="4.5" y="1.5" width="6" height="5" fill="none" stroke="#ccc" stroke-dasharray="1 1"/><rect x="4.5" y="8.5" width="10" height="7" fill="none" stroke="#ccc" stroke-dasharray="1 1"/><path d="M15 11H21L18 14z" fill="#ddd"/></svg>
<div class="a" style="left:127px;top:588px;width:196px;height:1px;background:#3a3a3a;border-bottom:1px solid #555"></div>
<div class="a ps" style="left:128px;top:595px">Abstand verteilen:</div>
<svg class="a" style="left:130px;top:609px" width="55" height="18" fill="none" stroke="#c8c8c8"><path d="M3 6.5H7M3 9.5H7"/><rect x="10" y="2" width="6" height="5" fill="#bbb" stroke="none"/><rect x="8.5" y="9.5" width="10" height="5"/><path d="M39.5 1V5M39.5 8V13M42.5 1V5"/><rect x="36.5" y="6.5" width="4" height="9"/><rect x="42" y="5" width="6" height="5" fill="#bbb" stroke="none"/></svg>
<div class="a pcb" style="left:131px;top:634px"></div>
<svg class="a" style="left:132px;top:630px" width="13" height="14"><path d="M2 7L5 11L11 1" stroke="#e8e8e8" stroke-width="1.6" fill="none"/></svg>
<div class="a ps" style="left:146px;top:634px">Abstand verwenden</div>
<div class="a pspin" style="left:240px;top:633px;background:#3a3a3a"></div>
<div class="a pinp" style="left:255px;top:633px;width:48px;color:#1a1a1a">15 mm</div>
<div class="a" style="left:123px;top:652px;width:207px;height:2px;background:#2a2a2a"></div>
<div class="a" style="left:123px;top:654px;width:207px;height:18px;background:#383838"></div>
<div class="a" style="left:123px;top:654px;width:92px;height:18px;background:#4a4a4a"></div>
<svg class="a" style="left:127px;top:657px" width="8" height="12"><path d="M1 4.5L4 1.5L7 4.5M1 7.5L4 10.5L7 7.5" stroke="#ccc" fill="none" stroke-width="1.1"/></svg>
<div class="a pt" style="left:136px;top:657px">Informationen</div>
<svg class="a" style="left:312px;top:659px" width="15" height="9"><path d="M0 2H4L2 4z" fill="#ddd"/><path d="M5 1.5H14M5 3.5H14M5 5.5H14M5 7.5H14" stroke="#ddd"/></svg>
<svg class="a" style="left:127px;top:686px" width="12" height="12"><path d="M5.5 1V10M1 5.5H10" stroke="#ddd" stroke-width="1.2"/><path d="M9 8L11 10L9 11z" fill="#ddd"/></svg>
<div class="a ps" style="left:146px;top:677px;line-height:12px">X:&#8202;241 mm<br>Y:&#8202;154,5 mm<br>D:</div>
<div class="a" style="left:225px;top:676px;width:1px;height:37px;background:#3a3a3a"></div>
<svg class="a" style="left:230px;top:687px" width="11" height="11"><path d="M1.5 3V9.5H8" stroke="#ccc" fill="none" stroke-dasharray="1 1"/><path d="M1.5 2.5H8.5V8" stroke="#ccc" fill="none"/><path d="M7 1L9 2.5L7 4" fill="none" stroke="#ccc"/></svg>
<div class="a ps" style="left:249px;top:677px;line-height:12px">B:<br>H:</div>
<svg class="a" style="left:245px;top:701px" width="12" height="8"><path d="M1 7H11L8 1z" stroke="#ccc" fill="none"/></svg>
<div class="a" style="left:127px;top:713px;width:199px;height:1px;background:#3a3a3a"></div>
<div class="a" style="left:225px;top:716px;width:1px;height:26px;background:#3a3a3a"></div>
<div class="a" style="left:127px;top:742px;width:199px;height:1px;background:#3a3a3a"></div>
<div class="a ps" style="left:127px;top:748px;width:100px;text-align:right;line-height:12px;letter-spacing:-0.25px">Position:<br>Letzte Änderung:<br>Autor:<br>Dateigröße:</div>
<div class="a ps" style="left:230px;top:748px;line-height:12px;letter-spacing:-0.4px">Macinto...chcover.indd<br>28.01.15, 08:12<br><br>4408 KB</div>
<!-- PDF DIALOG -->
<div class="a" style="left:535px;top:182px;width:773px;height:664px;background:#4b4b4b;border-radius:5px 5px 4px 4px;box-shadow:0 12px 35px rgba(0,0,0,.45),0 0 2px rgba(0,0,0,.5);overflow:hidden">
 <div class="a" style="left:0;top:0;width:773px;height:22px;background:linear-gradient(#ededed,#d5d5d5);border-bottom:1px solid #aaa"></div>
 <div class="a" style="left:0;top:4px;width:773px;text-align:center;font:13.5px 'Liberation Sans';color:#4a4a4a;letter-spacing:0.15px">Adobe PDF exportieren</div>
</div>
<div class="a dl" style="left:535px;top:222px;width:130px;text-align:right">Adobe PDF-Vorgabe:</div>
<div class="a sel" style="left:672px;top:220px;width:620px">[Qualitativ hochwertiger Druck] (geändert)</div>
<div class="a dl" style="left:535px;top:247px;width:130px;text-align:right">Standard:</div>
<div class="a sel" style="left:672px;top:245px;width:130px">Ohne</div>
<div class="a dl" style="left:980px;top:247px;width:143px;text-align:right">Kompatibilität:</div>
<div class="a sel" style="left:1129px;top:245px;width:163px">Acrobat 4 (PDF 1.3)</div>
<!-- nav list -->
<div class="a" style="left:550px;top:279px;width:140px;height:496px;border:1px solid #dba06a;box-shadow:0 0 0 1px #3a1e08;background:#4b4b4b"></div>
<div class="a" style="left:551px;top:319px;width:137px;height:20px;background:#4b5467"></div>
<div class="a nav" style="left:553px;top:284px">Allgemein</div>
<div class="a nav" style="left:553px;top:304px">Komprimierung</div>
<div class="a nav" style="left:553px;top:324px;color:#fff">Marken und Anschnitt</div>
<div class="a nav" style="left:553px;top:344px">Ausgabe</div>
<div class="a nav" style="left:553px;top:364px">Erweitert</div>
<div class="a nav" style="left:553px;top:384px">Sicherheit</div>
<div class="a nav" style="left:553px;top:404px">Übersicht</div>
<svg class="a" style="left:668px;top:399px" width="20" height="18"><path d="M10 1L19 17H1z" fill="#f4c41c" stroke="#e0b010" stroke-linejoin="round"/><path d="M10 6V12" stroke="#222" stroke-width="2"/><circle cx="10" cy="14.5" r="1.1" fill="#222"/></svg>
<!-- heading -->
<div class="a" style="left:705px;top:283px;font:12.5px 'Liberation Sans';color:#e6e6e6">Marken und Anschnitt</div>
<div class="a" style="left:704px;top:300px;width:588px;height:1px;background:#2e2e2e;border-bottom:1px solid #5a5a5a"></div>
<!-- group Marken -->
<div class="a grp" style="left:706px;top:327px;width:586px;height:164px"></div>
<div class="a dl" style="left:715px;top:319px;padding:0 4px;background:#4b4b4b">Marken</div>
<div class="a cb" style="left:718px;top:343px"></div><div class="a dl" style="left:734px;top:341px">Alle Druckermarken</div>
<div class="a cb" style="left:733px;top:366px"></div><div class="a dl" style="left:749px;top:364px">Schnittmarken</div>
<div class="a cb" style="left:733px;top:389px"></div><div class="a dl" style="left:749px;top:387px">Anschnittsmarken</div>
<div class="a cb" style="left:733px;top:412px"></div><div class="a dl" style="left:749px;top:410px">Passermarken</div>
<div class="a cb" style="left:733px;top:435px"></div><div class="a dl" style="left:749px;top:433px">Farbkontrollstreifen</div>
<div class="a cb" style="left:733px;top:458px"></div><div class="a dl" style="left:749px;top:456px">Seiteninformationen</div>
<div class="a dl" style="left:900px;top:341px;width:73px;text-align:right">Art:</div>
<div class="a sel" style="left:980px;top:340px;width:99px">Standard</div>
<div class="a dl" style="left:900px;top:371px;width:73px;text-align:right">Stärke:</div>
<div class="a sel" style="left:980px;top:370px;width:99px">0,25 Pt</div>
<div class="a dl" style="left:900px;top:401px;width:73px;text-align:right">Versatz:</div>
<div class="a dspin" style="left:980px;top:400px"></div>
<div class="a dinp" style="left:994px;top:400px;width:85px;color:#1a1a1a">2,117 mm</div>
<!-- group Anschnitt -->
<div class="a" style="left:700px;top:498px;width:368px;height:179px;border:1px solid #d27a40;box-shadow:inset 0 0 0 1px #8a4018"></div>
<div class="a grp" style="left:707px;top:508px;width:585px;height:165px"></div>
<div class="a dl" style="left:715px;top:500px;padding:0 4px;background:#4b4b4b">Anschnitt und Infobereich</div>
<div class="a cb" style="left:718px;top:524px"></div>
<svg class="a" style="left:719px;top:520px" width="13" height="14"><path d="M2 7L5 11L11 1" stroke="#e8e8e8" stroke-width="1.6" fill="none"/></svg>
<div class="a dl" style="left:734px;top:522px">Anschnittseinstellungen des Dokuments verwenden</div>
<div class="a dl" style="left:717px;top:552px;color:#a8a8a8">Anschnitt:</div>
<div class="a dl" style="left:700px;top:582px;width:54px;text-align:right;color:#a8a8a8">Oben:</div>
<div class="a dl" style="left:700px;top:607px;width:54px;text-align:right;color:#a8a8a8">Unten:</div>
<div class="a dspin dis" style="left:760px;top:580px"></div>
<div class="a dspin dis" style="left:760px;top:605px"></div>
<div class="a dinp" style="left:774px;top:580px;width:55px;color:#8a8a8a;background:#ababab">2 mm</div>
<div class="a dinp" style="left:774px;top:605px;width:55px;color:#8a8a8a;background:#ababab">2 mm</div>
<div class="a" style="left:841px;top:595px;width:18px;height:19px;border:1px solid #333;background:#4a4a4a"></div>
<svg class="a" style="left:845px;top:597px" width="10" height="15"><rect x="2" y="1.5" width="6" height="12" rx="3" fill="none" stroke="#999" stroke-width="1.4"/><path d="M5 4.5V10.5" stroke="#999" stroke-width="1.2"/></svg>
<div class="a dl" style="left:880px;top:582px;width:56px;text-align:right;color:#e0e0e0">Links:</div>
<div class="a dl" style="left:880px;top:607px;width:56px;text-align:right;color:#e0e0e0">Rechts:</div>
<div class="a dspin dis" style="left:943px;top:580px"></div>
<div class="a dspin dis" style="left:943px;top:605px"></div>
<div class="a dinp" style="left:957px;top:580px;width:55px;color:#8a8a8a;background:#ababab">2 mm</div>
<div class="a dinp" style="left:957px;top:605px;width:55px;color:#8a8a8a;background:#ababab">2 mm</div>
<div class="a cb" style="left:718px;top:644px"></div><div class="a dl" style="left:734px;top:642px">Infobereich einschließen</div>
<!-- buttons -->
<div class="a btn" style="left:551px;top:807px;width:130px;height:19px">Vorgabe speichern...</div>
<div class="a btn" style="left:1104px;top:807px;width:88px;height:19px">Abbrechen</div>
<div class="a btn" style="left:1203px;top:806px;width:90px;height:21px;border:2px solid #1e1e1e;line-height:16px">Exportieren</div>
<!-- LINKS PANEL -->
<div class="a" style="left:1544px;top:86px;width:208px;height:476px;background:#4a4a4a;border:1px solid #262626;box-shadow:0 0 3px rgba(0,0,0,.35)"></div>
<div class="a" style="left:1545px;top:87px;width:206px;height:19px;background:#303030"></div>
<div class="a" style="left:1545px;top:89px;width:24px;height:17px;background:#3d3d3d"></div>
<div class="a" style="left:1570px;top:89px;width:24px;height:17px;background:#3d3d3d"></div>
<div class="a" style="left:1594px;top:89px;width:92px;height:17px;background:#4a4a4a"></div>
<div class="a pt" style="left:1551px;top:91px;color:#aaa;width:18px;overflow:hidden">Seite</div>
<div class="a pt" style="left:1575px;top:91px;color:#aaa;width:19px;overflow:hidden">Ebenen</div>
<div class="a pt" style="left:1600px;top:91px">Verknüpfungen</div>
<svg class="a" style="left:1711px;top:93px" width="40" height="10"><path d="M1 1V9L5 5zM6 1V9L10 5z" fill="#ccc"/><path d="M16.5 0V10" stroke="#555"/><path d="M23 3H27L25 5z" fill="#ddd"/><path d="M28 1.5H37M28 3.5H37M28 5.5H37M28 7.5H37" stroke="#ddd"/></svg>
<div class="a" style="left:1545px;top:106px;width:206px;height:19px;background:#454545;border-bottom:1px solid #333"></div>
<div class="a" style="left:1545px;top:110px;font:bold 10px 'Liberation Sans';color:#e0e0e0">Name</div>
<svg class="a" style="left:1666px;top:113px" width="7" height="4"><path d="M0 4L3.5 0L7 4z" fill="#ccc"/></svg>
<div class="a" style="left:1675px;top:108px;width:1px;height:16px;background:#3a3a3a"></div>
<svg class="a" style="left:1678px;top:108px" width="14" height="13"><path d="M7 1L13 12H1z" fill="#d0d0d0"/><path d="M7 4.5V8.5" stroke="#444" stroke-width="1.6"/><circle cx="7" cy="10.2" r=".9" fill="#444"/></svg>
<div class="a" style="left:1699px;top:108px;width:1px;height:16px;background:#3a3a3a"></div>
<svg class="a" style="left:1707px;top:108px" width="13" height="15"><path d="M1 1H8L12 5V14H1z" fill="#d0d0d0"/><path d="M8 1V5H12" fill="#999"/></svg>
<div class="a" style="left:1733px;top:108px;width:1px;height:16px;background:#3a3a3a"></div>
<div class="a lrow" style="top:126px"></div>
<div class="a lrow" style="top:146px"></div>
<div class="a lrow" style="top:166px"></div>
<div class="a lrow" style="top:186px"></div>
<div class="a lrow" style="top:206px"></div>
<div class="a" style="left:1549px;top:130px;width:16px;height:12px;background:#e8e4cc"></div>
<div class="a" style="left:1549px;top:151px;width:16px;height:8px;background:repeating-linear-gradient(90deg,#222 0 1px,#eee 1px 2px);border:1px solid #eee"></div>
<div class="a" style="left:1549px;top:170px;width:16px;height:12px;background:linear-gradient(#6a6a40,#222 70%)"></div>
<div class="a" style="left:1549px;top:190px;width:16px;height:12px;background:radial-gradient(circle at 30% 50%,#444 0 3px,#223 4px,#4a6a30 9px)"></div>
<div class="a" style="left:1549px;top:210px;width:16px;height:12px;background:#ddd8c8"></div>
<div class="a" style="left:1555px;top:211px;width:3px;height:9px;background:#777"></div>
<div class="a lt" style="top:131px">background.jpg</div>
<div class="a lt" style="top:151px">isbn.jpg</div>
<div class="a lt" style="top:171px">photo-casey-fyfe-n-202</div>
<div class="a lt" style="top:191px">photo-mainfish-n-132</div>
<div class="a lt" style="top:211px">photo-m...iske-n-20.jpg</div>
<div class="a ln" style="top:130px">1</div>
<div class="a ln" style="top:150px">1</div>
<div class="a ln" style="top:170px">3</div>
<div class="a ln" style="top:190px">3</div>
<div class="a ln" style="top:210px">3</div>
<div class="a" style="left:1739px;top:126px;width:12px;height:103px;background:#353535"></div>
<div class="a" style="left:1741px;top:141px;width:9px;height:60px;background:#8e8e8e"></div>
<svg class="a" style="left:1740px;top:130px" width="10" height="100"><path d="M1 6H9L5 1z" fill="#ddd"/><path d="M1 91H9L5 96z" fill="#ddd"/></svg>
<div class="a" style="left:1545px;top:229px;width:194px;height:14px;background:#343434"></div>
<svg class="a" style="left:1549px;top:231px" width="190" height="10"><path d="M6 1V9L1 5z" fill="#777"/><path d="M182 1V9L187 5z" fill="#777"/></svg>
<svg class="a" style="left:1547px;top:245px" width="180" height="14"><path d="M1 3H10L5.5 8z" fill="#ccc"/><path d="M78 3.5H75A3.5 3.5 0 0 0 75 10.5H78M83 3.5H86A3.5 3.5 0 0 1 86 10.5H83M77 7H84" stroke="#999" fill="none" stroke-width="1.6"/><path d="M102 7H110M107 4L110 7L107 10" stroke="#999" stroke-width="1.5" fill="none"/><path d="M111 1H116L119 4V12H111z" fill="#999"/><path d="M112 12H120" stroke="#777"/><path d="M137 6A5.5 5.5 0 0 1 147 3.5M148 8A5.5 5.5 0 0 1 138 10.5" stroke="#999" fill="none" stroke-width="1.6"/><path d="M145 1L149 4L145 6z" fill="#999"/><path d="M140 8L136 10L140 13z" fill="#999"/><path d="M166 12L167 9L175 1L178 4L170 12z" fill="#999"/></svg>
<div class="a" style="left:1560px;top:246px;font:9.5px 'Liberation Sans';color:#ddd;letter-spacing:-0.2px">6 Verknüp...</div>
<div class="a" style="left:1545px;top:260px;width:206px;height:1px;background:#3a3a3a;border-bottom:1px solid #555"></div>
<div class="a" style="left:1548px;top:268px;font:bold 9.5px 'Liberation Sans';color:#ddd;letter-spacing:-0.2px">Verknüpfungsinformationen</div>
<svg class="a" style="left:1718px;top:267px" width="30" height="10"><path d="M6 1V9L1 5z" fill="#ccc"/><path d="M24 1V9L29 5z" fill="#ccc"/></svg>
<div class="a" style="left:1545px;top:283px;width:206px;height:1px;background:#3a3a3a"></div>
<div class="a" style="left:1739px;top:288px;width:12px;height:250px;background:#3a3a3a"></div>
<svg class="a" style="left:1740px;top:290px" width="10" height="248"><path d="M1 6H9L5 1z" fill="#777"/><path d="M1 239H9L5 244z" fill="#777"/></svg>
<svg class="a" style="left:1740px;top:542px" width="10" height="10"><g fill="#999"><rect x="8" y="0" width="1" height="1"/><rect x="6" y="2" width="1" height="1"/><rect x="8" y="2" width="1" height="1"/><rect x="4" y="4" width="1" height="1"/><rect x="6" y="4" width="1" height="1"/><rect x="8" y="4" width="1" height="1"/><rect x="2" y="6" width="1" height="1"/><rect x="4" y="6" width="1" height="1"/><rect x="6" y="6" width="1" height="1"/><rect x="8" y="6" width="1" height="1"/></g></svg>
<div class="a" style="left:1545px;top:553px;width:206px;height:9px;background:#3e3e3e;border-top:1px solid #2a2a2a"></div>
<div class="a" style="left:1639px;top:555px;width:19px;height:4px;background:repeating-linear-gradient(90deg,#111 0 1px,#3e3e3e 1px 2px)"></div>
<!-- RIGHT DOCK -->
<div class="a" style="left:1754px;top:76px;width:166px;height:907px;background:#484848"></div>
<div class="a" style="left:1754px;top:76px;width:166px;height:12px;background:#383838;border-bottom:1px solid #2a2a2a"></div>
<svg class="a" style="left:1905px;top:79px" width="11" height="6"><path d="M4 0V6L0 3zM9 0V6L5 3z" fill="#bbb"/></svg>
<!-- groups -->
<div class="a dg" style="top:88px;height:96px"></div>
<div class="a dg" style="top:186px;height:97px"></div>
<div class="a dg" style="top:285px;height:37px"></div>
<div class="a dg" style="top:324px;height:96px"></div>
<div class="a dg" style="top:421px;height:96px"></div>
<div class="a dg" style="top:519px;height:67px"></div>
<div class="a dg" style="top:588px;height:95px"></div>
<div class="a grip" style="left:1826px;top:91px"></div>
<div class="a grip" style="left:1826px;top:189px"></div>
<div class="a grip" style="left:1826px;top:288px"></div>
<div class="a grip" style="left:1826px;top:327px"></div>
<div class="a grip" style="left:1826px;top:424px"></div>
<div class="a grip" style="left:1826px;top:522px"></div>
<div class="a grip" style="left:1826px;top:591px"></div>
<div class="a" style="left:1758px;top:155px;width:156px;height:24px;background:#363636;border-radius:2px"></div>
<div class="a dk" style="top:106px">Seiten</div>
<div class="a dk" style="top:134px">Ebenen</div>
<div class="a dk" style="top:162px">Verknüpfungen</div>
<div class="a dk" style="top:203px">Farbfelder</div>
<div class="a dk" style="top:231px">Kontur</div>
<div class="a dk" style="top:259px">Verlauf</div>
<div class="a dk" style="top:300px">Effekte</div>
<div class="a dk" style="top:341px">Zeichenformate</div>
<div class="a dk" style="top:369px">Absatzformate</div>
<div class="a dk" style="top:397px">Objektformate</div>
<div class="a dk" style="top:438px">Tabelle</div>
<div class="a dk" style="top:466px">Tabellenformate</div>
<div class="a dk" style="top:494px">Zellenformate</div>
<div class="a dk" style="top:535px">Datenzusammenführ...</div>
<div class="a dk" style="top:563px">Skripte</div>
<div class="a dk" style="top:604px">Glyphen</div>
<div class="a dk" style="top:632px">Zeichen</div>
<div class="a dk" style="top:660px">Absatz</div>
<svg class="a" style="left:1763px;top:102px" width="22" height="20"><path d="M3 5H10V17H3zM13 5H20V17H13z" fill="#c8c8c8"/><path d="M3 5L6 2H10V5M13 5V2H17L20 5" fill="#c8c8c8"/><path d="M11.5 0V20" stroke="#eee"/></svg>
<svg class="a" style="left:1763px;top:130px" width="22" height="20"><path d="M2 8L11 3L20 8L11 13z" fill="#c8c8c8"/><path d="M2 12L11 17L20 12" fill="none" stroke="#c8c8c8" stroke-width="2"/></svg>
<svg class="a" style="left:1763px;top:158px" width="22" height="20"><path d="M9 5H6A4.5 4.5 0 0 0 6 14H9M14 5H17A4.5 4.5 0 0 1 17 14H14M8 9.5H15" fill="none" stroke="#d0d0d0" stroke-width="1.8"/></svg>
<svg class="a" style="left:1763px;top:199px" width="22" height="20"><rect x="3.5" y="4.5" width="16" height="11" fill="none" stroke="#c8c8c8"/><path d="M3 8.5H20M3 12H20M9 4V16M14 4V16" stroke="#c8c8c8"/></svg>
<svg class="a" style="left:1763px;top:227px" width="22" height="20"><path d="M3 4.5H20M3 9.5H20M3 15H20" stroke="#c8c8c8" stroke-width="1.6"/></svg>
<svg class="a" style="left:1763px;top:255px" width="22" height="20"><rect x="3.5" y="3.5" width="16" height="12" fill="url(#gv)" stroke="#bbb"/><defs><linearGradient id="gv"><stop offset="0" stop-color="#fff"/><stop offset="1" stop-color="#222"/></linearGradient></defs></svg>
<svg class="a" style="left:1763px;top:296px" width="22" height="20"><text x="2" y="16" font-family="Liberation Serif" font-style="italic" font-size="18" fill="#c8c8c8">fx</text></svg>
<svg class="a" style="left:1763px;top:337px" width="22" height="20"><path d="M9 11L13.5 1L18 11M10.5 7.5H16.5" fill="none" stroke="#c8c8c8" stroke-width="1.5"/><rect x="1.5" y="9.5" width="6" height="6" fill="#484848" stroke="#c8c8c8"/><rect x="4.5" y="12.5" width="6" height="6" fill="#484848" stroke="#c8c8c8"/></svg>
<svg class="a" style="left:1763px;top:365px" width="22" height="20"><path d="M13.5 2V16M16.5 2V16M10 2H18" fill="none" stroke="#c8c8c8" stroke-width="1.4"/><path d="M13.5 2A4 4 0 0 0 13.5 10z" fill="#c8c8c8"/><rect x="1.5" y="9.5" width="6" height="6" fill="#484848" stroke="#c8c8c8"/><rect x="4.5" y="12.5" width="6" height="6" fill="#484848" stroke="#c8c8c8"/></svg>
<svg class="a" style="left:1763px;top:393px" width="22" height="20"><rect x="7.5" y="1.5" width="12" height="12" fill="#777" stroke="#c8c8c8" stroke-dasharray="3 6"/><rect x="1.5" y="9.5" width="6" height="6" fill="#484848" stroke="#c8c8c8"/><rect x="4.5" y="12.5" width="6" height="6" fill="#484848" stroke="#c8c8c8"/></svg>
<svg class="a" style="left:1763px;top:434px" width="22" height="20"><rect x="3.5" y="3.5" width="15" height="14" fill="none" stroke="#c8c8c8"/><rect x="4" y="4" width="14" height="3" fill="#c8c8c8"/><path d="M3 10.5H19M3 14H19M7.5 7V18" stroke="#c8c8c8"/></svg>
<svg class="a" style="left:1763px;top:462px" width="22" height="20"><rect x="7.5" y="2.5" width="12" height="11" fill="none" stroke="#c8c8c8"/><rect x="8" y="3" width="11" height="2.5" fill="#c8c8c8"/><path d="M11 8.5H19M11 11H19" stroke="#c8c8c8"/><rect x="1.5" y="9.5" width="6" height="6" fill="#484848" stroke="#c8c8c8"/><rect x="4.5" y="12.5" width="6" height="6" fill="#484848" stroke="#c8c8c8"/></svg>
<svg class="a" style="left:1763px;top:490px" width="22" height="20"><rect x="7.5" y="2.5" width="12" height="11" fill="none" stroke="#c8c8c8"/><rect x="8" y="3" width="11" height="2.5" fill="#c8c8c8"/><rect x="12" y="7" width="7" height="6" fill="#999"/><rect x="1.5" y="9.5" width="6" height="6" fill="#484848" stroke="#c8c8c8"/><rect x="4.5" y="12.5" width="6" height="6" fill="#484848" stroke="#c8c8c8"/></svg>
<svg class="a" style="left:1763px;top:531px" width="22" height="20"><path d="M0 8H7M4 5L7 8L4 11" fill="none" stroke="#ddd" stroke-width="1.4"/><path d="M9 1H14L17 4V9H9z" fill="#c8c8c8"/><circle cx="15" cy="14" r="3.5" fill="none" stroke="#c8c8c8" stroke-width="2.5" stroke-dasharray="1.6 1"/></svg>
<svg class="a" style="left:1763px;top:559px" width="22" height="20"><path d="M18 2C9 0 3 5 9 9C14 12 8 17 3 15C7 20 16 19 15 12C14 8 9 7 13 5C15 4 17 4 18 2z" fill="#c8c8c8"/></svg>
<svg class="a" style="left:1763px;top:600px" width="22" height="20"><text x="3" y="16" font-family="Liberation Serif" font-style="italic" font-size="19" fill="#c8c8c8">A</text></svg>
<svg class="a" style="left:1763px;top:628px" width="22" height="20"><text x="2" y="16" font-family="Liberation Sans" font-size="17" fill="#c8c8c8">A</text><path d="M17.5 2V18" stroke="#c8c8c8"/></svg>
<svg class="a" style="left:1763px;top:656px" width="22" height="20"><path d="M11 3V17M14 3V17M8 3H15" fill="none" stroke="#c8c8c8" stroke-width="1.4"/><path d="M11 3A3.5 3.5 0 0 0 11 10z" fill="#c8c8c8"/></svg>
<div class="a" style="left:1918px;top:0;width:2px;height:983px;background:#2a2a2a"></div>

</body></html>
